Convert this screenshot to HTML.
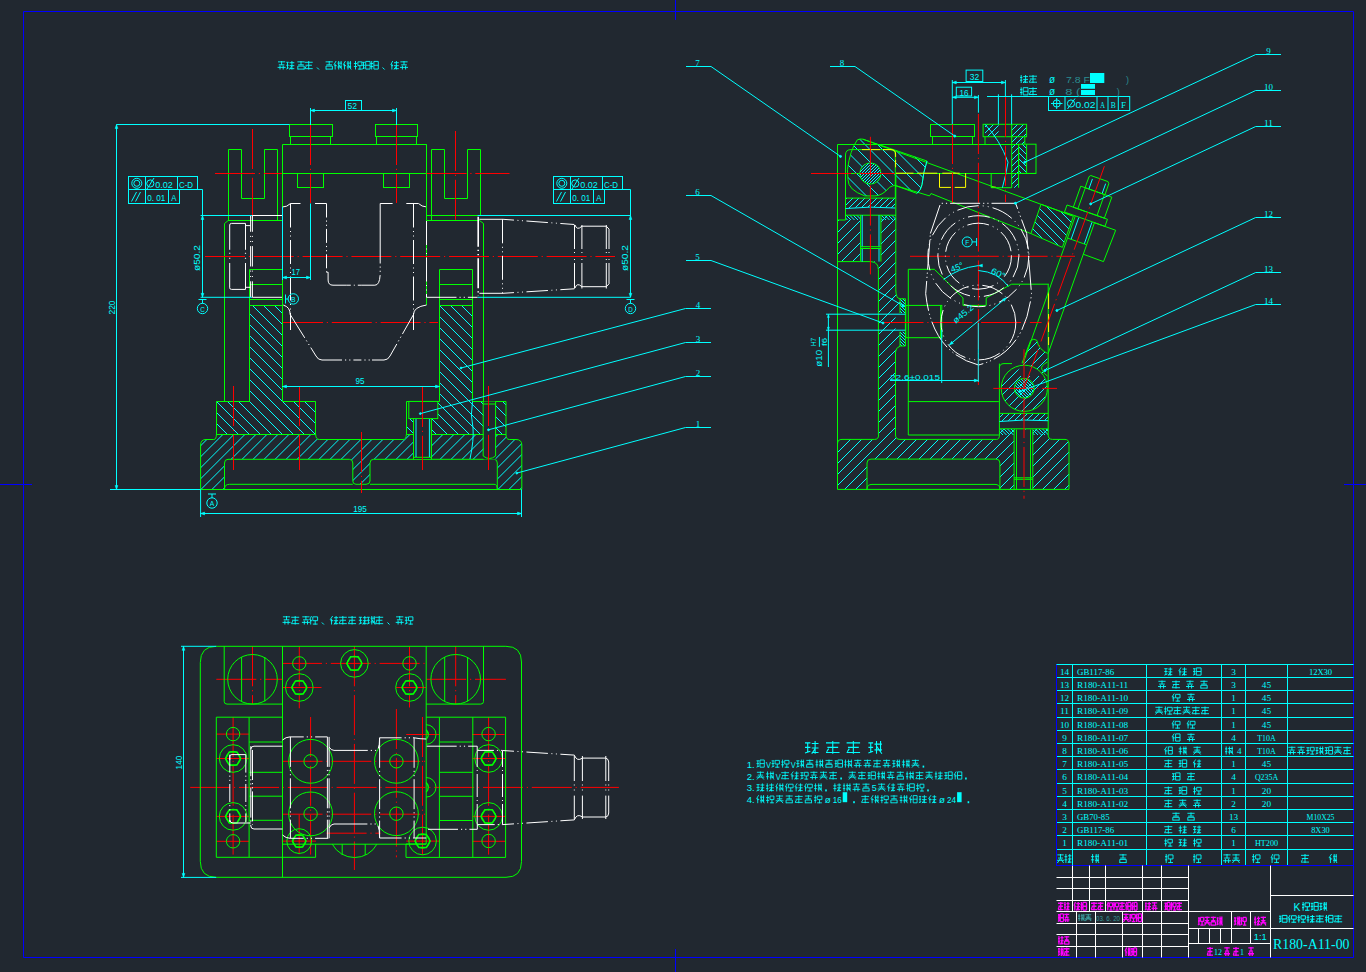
<!DOCTYPE html>
<html><head><meta charset="utf-8"><style>
html,body{margin:0;padding:0;background:#212830;width:1366px;height:972px;overflow:hidden;}
svg{display:block;}

</style></head><body>
<svg width="1366" height="972" viewBox="0 0 1366 972">
<rect x="0" y="0" width="1366" height="972" fill="#212830"/>
<polygon points="23.5,11.5 1353.5,11.5 1353.5,957.5 23.5,957.5" fill="none" stroke="#0000ff" stroke-width="1"/>
<line x1="675.5" y1="0" x2="675.5" y2="20" stroke="#0000ff" stroke-width="1"/>
<line x1="675.5" y1="949" x2="675.5" y2="972" stroke="#0000ff" stroke-width="1"/>
<line x1="0" y1="484.5" x2="32" y2="484.5" stroke="#0000ff" stroke-width="1"/>
<line x1="1344" y1="484.5" x2="1366" y2="484.5" stroke="#0000ff" stroke-width="1"/>
<line x1="1056" y1="664.5" x2="1353.5" y2="664.5" stroke="#00ffff" stroke-width="1"/>
<line x1="1056" y1="677.5" x2="1353.5" y2="677.5" stroke="#00ffff" stroke-width="1"/>
<line x1="1056" y1="690.5" x2="1353.5" y2="690.5" stroke="#00ffff" stroke-width="1"/>
<line x1="1056" y1="703.5" x2="1353.5" y2="703.5" stroke="#00ffff" stroke-width="1"/>
<line x1="1056" y1="717.5" x2="1353.5" y2="717.5" stroke="#00ffff" stroke-width="1"/>
<line x1="1056" y1="730.5" x2="1353.5" y2="730.5" stroke="#00ffff" stroke-width="1"/>
<line x1="1056" y1="743.5" x2="1353.5" y2="743.5" stroke="#00ffff" stroke-width="1"/>
<line x1="1056" y1="756.5" x2="1353.5" y2="756.5" stroke="#00ffff" stroke-width="1"/>
<line x1="1056" y1="769.5" x2="1353.5" y2="769.5" stroke="#00ffff" stroke-width="1"/>
<line x1="1056" y1="783.5" x2="1353.5" y2="783.5" stroke="#00ffff" stroke-width="1"/>
<line x1="1056" y1="796.5" x2="1353.5" y2="796.5" stroke="#00ffff" stroke-width="1"/>
<line x1="1056" y1="809.5" x2="1353.5" y2="809.5" stroke="#00ffff" stroke-width="1"/>
<line x1="1056" y1="822.5" x2="1353.5" y2="822.5" stroke="#00ffff" stroke-width="1"/>
<line x1="1056" y1="835.5" x2="1353.5" y2="835.5" stroke="#00ffff" stroke-width="1"/>
<line x1="1056" y1="849.5" x2="1353.5" y2="849.5" stroke="#00ffff" stroke-width="1"/>
<line x1="1072.5" y1="664.5" x2="1072.5" y2="865.5" stroke="#00ffff" stroke-width="1"/>
<line x1="1146.5" y1="664.5" x2="1146.5" y2="865.5" stroke="#00ffff" stroke-width="1"/>
<line x1="1221.5" y1="664.5" x2="1221.5" y2="865.5" stroke="#00ffff" stroke-width="1"/>
<line x1="1245.5" y1="664.5" x2="1245.5" y2="865.5" stroke="#00ffff" stroke-width="1"/>
<line x1="1287.5" y1="664.5" x2="1287.5" y2="865.5" stroke="#00ffff" stroke-width="1"/>
<line x1="1056.5" y1="664.5" x2="1056.5" y2="865.5" stroke="#0000ff" stroke-width="1"/>
<text x="1064.5" y="674.5" fill="#00ffff" font-size="8.5" font-family="Liberation Serif" text-anchor="middle" font-weight="normal" textLength="9.2" lengthAdjust="spacingAndGlyphs">14</text>
<text x="1077" y="674.5" fill="#00ffff" font-size="8.5" font-family="Liberation Serif" text-anchor="start" font-weight="normal" textLength="37.2" lengthAdjust="spacingAndGlyphs">GB117-86</text>
<path d="M1164.30 668.70H1167.50M1165.90 668.70V674.70M1164.30 671.50H1167.50M1164.30 675.10L1167.50 673.90M1168.30 669.10H1172.30M1168.30 671.90H1172.30M1168.30 674.70H1172.30M1170.30 667.50V675.50M1168.30 675.50L1170.30 672.30" fill="none" stroke="#00ffff" stroke-width="0.9"/>
<path d="M1180.94 667.50L1178.70 671.10M1179.96 670.30V675.50M1179.10 671.90H1181.50M1182.30 669.10H1186.70M1182.30 671.90H1186.70M1182.30 674.70H1186.70M1184.50 667.50V675.50M1182.30 675.50L1184.50 672.30" fill="none" stroke="#00ffff" stroke-width="0.9"/>
<path d="M1193.10 668.70H1195.50M1194.30 668.70V674.70M1193.10 671.50H1195.50M1193.10 675.10L1195.50 673.90M1196.30 667.90V675.10M1201.10 667.90V675.10M1196.30 667.90H1201.10M1196.30 671.50H1201.10M1196.30 675.10H1201.10" fill="none" stroke="#00ffff" stroke-width="0.9"/>
<text x="1233.5" y="674.5" fill="#00ffff" font-size="8.5" font-family="Liberation Serif" text-anchor="middle" font-weight="normal" textLength="4.6" lengthAdjust="spacingAndGlyphs">3</text>
<text x="1320.5" y="674.5" fill="#00ffff" font-size="8.5" font-family="Liberation Serif" text-anchor="middle" font-weight="normal" textLength="23.25" lengthAdjust="spacingAndGlyphs">12X30</text>
<text x="1064.5" y="687.5" fill="#00ffff" font-size="8.5" font-family="Liberation Serif" text-anchor="middle" font-weight="normal" textLength="9.2" lengthAdjust="spacingAndGlyphs">13</text>
<text x="1077" y="687.5" fill="#00ffff" font-size="8.5" font-family="Liberation Serif" text-anchor="start" font-weight="normal" textLength="51.150000000000006" lengthAdjust="spacingAndGlyphs">R180-A11-11</text>
<path d="M1158.40 681.30H1165.60M1162.00 680.50V684.10M1159.20 684.10H1164.80M1158.00 686.50H1166.00M1160.40 684.90V688.50M1163.60 684.90V688.50" fill="none" stroke="#00ffff" stroke-width="0.9"/>
<path d="M1172.00 681.70H1180.00M1172.80 684.50H1179.20M1172.00 687.70H1180.00M1176.00 680.50V688.50M1173.60 685.30L1172.40 687.30" fill="none" stroke="#00ffff" stroke-width="0.9"/>
<path d="M1186.40 681.30H1193.60M1190.00 680.50V684.10M1187.20 684.10H1192.80M1186.00 686.50H1194.00M1188.40 684.90V688.50M1191.60 684.90V688.50" fill="none" stroke="#00ffff" stroke-width="0.9"/>
<path d="M1200.40 681.30H1207.60M1204.00 680.50V684.10M1201.20 684.10H1206.80M1200.80 685.30V688.50M1207.20 685.30V688.50M1200.80 685.30H1207.20M1200.80 688.10H1207.20" fill="none" stroke="#00ffff" stroke-width="0.9"/>
<text x="1233.5" y="687.5" fill="#00ffff" font-size="8.5" font-family="Liberation Serif" text-anchor="middle" font-weight="normal" textLength="4.6" lengthAdjust="spacingAndGlyphs">3</text>
<text x="1266.5" y="687.5" fill="#00ffff" font-size="8.5" font-family="Liberation Serif" text-anchor="middle" font-weight="normal" textLength="9.3" lengthAdjust="spacingAndGlyphs">45</text>
<text x="1064.5" y="700.5" fill="#00ffff" font-size="8.5" font-family="Liberation Serif" text-anchor="middle" font-weight="normal" textLength="9.2" lengthAdjust="spacingAndGlyphs">12</text>
<text x="1077" y="700.5" fill="#00ffff" font-size="8.5" font-family="Liberation Serif" text-anchor="start" font-weight="normal" textLength="51.150000000000006" lengthAdjust="spacingAndGlyphs">R180-A11-10</text>
<path d="M1174.24 693.50L1172.00 697.10M1173.26 696.30V701.50M1172.40 697.90H1174.80M1175.60 694.30H1180.00M1175.60 694.30V697.90M1180.00 694.30V697.90M1175.60 697.90H1180.00M1175.60 701.10H1180.00M1177.80 697.90V701.50" fill="none" stroke="#00ffff" stroke-width="0.9"/>
<path d="M1187.40 694.30H1194.60M1191.00 693.50V697.10M1188.20 697.10H1193.80M1187.00 699.50H1195.00M1189.40 697.90V701.50M1192.60 697.90V701.50" fill="none" stroke="#00ffff" stroke-width="0.9"/>
<text x="1233.5" y="700.5" fill="#00ffff" font-size="8.5" font-family="Liberation Serif" text-anchor="middle" font-weight="normal" textLength="4.6" lengthAdjust="spacingAndGlyphs">1</text>
<text x="1266.5" y="700.5" fill="#00ffff" font-size="8.5" font-family="Liberation Serif" text-anchor="middle" font-weight="normal" textLength="9.3" lengthAdjust="spacingAndGlyphs">45</text>
<text x="1064.5" y="713.5" fill="#00ffff" font-size="8.5" font-family="Liberation Serif" text-anchor="middle" font-weight="normal" textLength="9.2" lengthAdjust="spacingAndGlyphs">11</text>
<text x="1077" y="713.5" fill="#00ffff" font-size="8.5" font-family="Liberation Serif" text-anchor="start" font-weight="normal" textLength="51.150000000000006" lengthAdjust="spacingAndGlyphs">R180-A11-09</text>
<path d="M1155.40 707.30H1162.60M1159.00 706.50V710.10M1156.20 710.10H1161.80M1159.00 710.50L1155.40 714.50M1159.00 710.50L1162.60 714.50M1155.00 712.10H1163.00" fill="none" stroke="#00ffff" stroke-width="0.9"/>
<path d="M1165.40 706.50V714.50M1164.20 708.90H1166.60M1164.20 711.70H1166.60M1167.40 707.30H1172.20M1167.40 707.30V710.90M1172.20 707.30V710.90M1167.40 710.90H1172.20M1167.40 714.10H1172.20M1169.80 710.90V714.50" fill="none" stroke="#00ffff" stroke-width="0.9"/>
<path d="M1173.40 707.70H1181.40M1174.20 710.50H1180.60M1173.40 713.70H1181.40M1177.40 706.50V714.50M1175.00 711.30L1173.80 713.30" fill="none" stroke="#00ffff" stroke-width="0.9"/>
<path d="M1183.00 707.30H1190.20M1186.60 706.50V710.10M1183.80 710.10H1189.40M1186.60 710.50L1183.00 714.50M1186.60 710.50L1190.20 714.50M1182.60 712.10H1190.60" fill="none" stroke="#00ffff" stroke-width="0.9"/>
<path d="M1191.80 707.70H1199.80M1192.60 710.50H1199.00M1191.80 713.70H1199.80M1195.80 706.50V714.50M1193.40 711.30L1192.20 713.30" fill="none" stroke="#00ffff" stroke-width="0.9"/>
<path d="M1201.00 707.70H1209.00M1201.80 710.50H1208.20M1201.00 713.70H1209.00M1205.00 706.50V714.50M1202.60 711.30L1201.40 713.30" fill="none" stroke="#00ffff" stroke-width="0.9"/>
<text x="1233.5" y="713.5" fill="#00ffff" font-size="8.5" font-family="Liberation Serif" text-anchor="middle" font-weight="normal" textLength="4.6" lengthAdjust="spacingAndGlyphs">1</text>
<text x="1266.5" y="713.5" fill="#00ffff" font-size="8.5" font-family="Liberation Serif" text-anchor="middle" font-weight="normal" textLength="9.3" lengthAdjust="spacingAndGlyphs">45</text>
<text x="1064.5" y="727.5" fill="#00ffff" font-size="8.5" font-family="Liberation Serif" text-anchor="middle" font-weight="normal" textLength="9.2" lengthAdjust="spacingAndGlyphs">10</text>
<text x="1077" y="727.5" fill="#00ffff" font-size="8.5" font-family="Liberation Serif" text-anchor="start" font-weight="normal" textLength="51.150000000000006" lengthAdjust="spacingAndGlyphs">R180-A11-08</text>
<path d="M1173.92 720.50L1172.00 724.10M1173.08 723.30V728.50M1172.40 724.90H1174.40M1175.20 721.30H1180.00M1175.20 721.30V724.90M1180.00 721.30V724.90M1175.20 724.90H1180.00M1175.20 728.10H1180.00M1177.60 724.90V728.50" fill="none" stroke="#00ffff" stroke-width="0.9"/>
<path d="M1188.92 720.50L1187.00 724.10M1188.08 723.30V728.50M1187.40 724.90H1189.40M1190.20 721.30H1195.00M1190.20 721.30V724.90M1195.00 721.30V724.90M1190.20 724.90H1195.00M1190.20 728.10H1195.00M1192.60 724.90V728.50" fill="none" stroke="#00ffff" stroke-width="0.9"/>
<text x="1233.5" y="727.5" fill="#00ffff" font-size="8.5" font-family="Liberation Serif" text-anchor="middle" font-weight="normal" textLength="4.6" lengthAdjust="spacingAndGlyphs">1</text>
<text x="1266.5" y="727.5" fill="#00ffff" font-size="8.5" font-family="Liberation Serif" text-anchor="middle" font-weight="normal" textLength="9.3" lengthAdjust="spacingAndGlyphs">45</text>
<text x="1064.5" y="740.5" fill="#00ffff" font-size="8.5" font-family="Liberation Serif" text-anchor="middle" font-weight="normal" textLength="4.6" lengthAdjust="spacingAndGlyphs">9</text>
<text x="1077" y="740.5" fill="#00ffff" font-size="8.5" font-family="Liberation Serif" text-anchor="start" font-weight="normal" textLength="51.150000000000006" lengthAdjust="spacingAndGlyphs">R180-A11-07</text>
<path d="M1174.24 733.50L1172.00 737.10M1173.26 736.30V741.50M1172.40 737.90H1174.80M1175.60 733.90V741.10M1180.00 733.90V741.10M1175.60 733.90H1180.00M1175.60 737.50H1180.00M1175.60 741.10H1180.00" fill="none" stroke="#00ffff" stroke-width="0.9"/>
<path d="M1187.40 734.30H1194.60M1191.00 733.50V737.10M1188.20 737.10H1193.80M1187.00 739.50H1195.00M1189.40 737.90V741.50M1192.60 737.90V741.50" fill="none" stroke="#00ffff" stroke-width="0.9"/>
<text x="1233.5" y="740.5" fill="#00ffff" font-size="8.5" font-family="Liberation Serif" text-anchor="middle" font-weight="normal" textLength="4.6" lengthAdjust="spacingAndGlyphs">4</text>
<text x="1266.5" y="740.5" fill="#00ffff" font-size="8.5" font-family="Liberation Serif" text-anchor="middle" font-weight="normal" textLength="18.6" lengthAdjust="spacingAndGlyphs">T10A</text>
<text x="1064.5" y="753.5" fill="#00ffff" font-size="8.5" font-family="Liberation Serif" text-anchor="middle" font-weight="normal" textLength="4.6" lengthAdjust="spacingAndGlyphs">8</text>
<text x="1077" y="753.5" fill="#00ffff" font-size="8.5" font-family="Liberation Serif" text-anchor="start" font-weight="normal" textLength="51.150000000000006" lengthAdjust="spacingAndGlyphs">R180-A11-06</text>
<path d="M1166.86 746.50L1164.30 750.10M1165.74 749.30V754.50M1164.70 750.90H1167.50M1168.30 746.90V754.10M1172.30 746.90V754.10M1168.30 746.90H1172.30M1168.30 750.50H1172.30M1168.30 754.10H1172.30" fill="none" stroke="#00ffff" stroke-width="0.9"/>
<path d="M1180.30 746.50V754.50M1178.70 748.90H1181.90M1178.70 751.70H1181.90M1182.70 748.50H1186.70M1183.90 746.50V754.50M1185.90 746.50V752.90M1182.70 752.10H1186.70M1183.50 749.70L1186.70 754.50" fill="none" stroke="#00ffff" stroke-width="0.9"/>
<path d="M1193.50 747.30H1200.70M1197.10 746.50V750.10M1194.30 750.10H1199.90M1197.10 750.50L1193.50 754.50M1197.10 750.50L1200.70 754.50M1193.10 752.10H1201.10" fill="none" stroke="#00ffff" stroke-width="0.9"/>
<path d="M1226.20 746.50V754.50M1225.00 748.90H1227.40M1225.00 751.70H1227.40M1228.20 748.50H1233.00M1229.40 746.50V754.50M1232.20 746.50V752.90M1228.20 752.10H1233.00M1229.80 749.70L1233.00 754.50" fill="none" stroke="#00ffff" stroke-width="0.9"/>
<text x="1237" y="753.5" fill="#00ffff" font-size="8.5" font-family="Liberation Serif" text-anchor="start" font-weight="normal" textLength="4.6" lengthAdjust="spacingAndGlyphs">4</text>
<text x="1266.5" y="753.5" fill="#00ffff" font-size="8.5" font-family="Liberation Serif" text-anchor="middle" font-weight="normal" textLength="18.6" lengthAdjust="spacingAndGlyphs">T10A</text>
<path d="M1288.39 747.30H1295.41M1291.90 746.50V750.10M1289.17 750.10H1294.63M1288.00 752.50H1295.80M1290.34 750.90V754.50M1293.46 750.90V754.50" fill="none" stroke="#00ffff" stroke-width="0.9"/>
<path d="M1297.59 747.30H1304.61M1301.10 746.50V750.10M1298.37 750.10H1303.83M1297.20 752.50H1305.00M1299.54 750.90V754.50M1302.66 750.90V754.50" fill="none" stroke="#00ffff" stroke-width="0.9"/>
<path d="M1306.40 747.70H1309.52M1307.96 747.70V753.70M1306.40 750.50H1309.52M1306.40 754.10L1309.52 752.90M1310.30 747.30H1314.20M1310.30 747.30V750.90M1314.20 747.30V750.90M1310.30 750.90H1314.20M1310.30 754.10H1314.20M1312.25 750.90V754.50" fill="none" stroke="#00ffff" stroke-width="0.9"/>
<path d="M1315.60 747.70H1318.33M1316.96 747.70V753.70M1315.60 750.50H1318.33M1315.60 754.10L1318.33 752.90M1319.11 748.50H1323.40M1320.28 746.50V754.50M1322.62 746.50V752.90M1319.11 752.10H1323.40M1320.28 749.70L1323.40 754.50" fill="none" stroke="#00ffff" stroke-width="0.9"/>
<path d="M1324.80 747.70H1327.92M1326.36 747.70V753.70M1324.80 750.50H1327.92M1324.80 754.10L1327.92 752.90M1328.70 746.90V754.10M1332.60 746.90V754.10M1328.70 746.90H1332.60M1328.70 750.50H1332.60M1328.70 754.10H1332.60" fill="none" stroke="#00ffff" stroke-width="0.9"/>
<path d="M1334.39 747.30H1341.41M1337.90 746.50V750.10M1335.17 750.10H1340.63M1337.90 750.50L1334.39 754.50M1337.90 750.50L1341.41 754.50M1334.00 752.10H1341.80" fill="none" stroke="#00ffff" stroke-width="0.9"/>
<path d="M1343.20 747.70H1351.00M1343.98 750.50H1350.22M1343.20 753.70H1351.00M1347.10 746.50V754.50M1344.76 751.30L1343.59 753.30" fill="none" stroke="#00ffff" stroke-width="0.9"/>
<text x="1064.5" y="766.5" fill="#00ffff" font-size="8.5" font-family="Liberation Serif" text-anchor="middle" font-weight="normal" textLength="4.6" lengthAdjust="spacingAndGlyphs">7</text>
<text x="1077" y="766.5" fill="#00ffff" font-size="8.5" font-family="Liberation Serif" text-anchor="start" font-weight="normal" textLength="51.150000000000006" lengthAdjust="spacingAndGlyphs">R180-A11-05</text>
<path d="M1164.30 760.70H1172.30M1165.10 763.50H1171.50M1164.30 766.70H1172.30M1168.30 759.50V767.50M1165.90 764.30L1164.70 766.30" fill="none" stroke="#00ffff" stroke-width="0.9"/>
<path d="M1178.70 760.70H1181.50M1180.10 760.70V766.70M1178.70 763.50H1181.50M1178.70 767.10L1181.50 765.90M1182.30 759.90V767.10M1186.70 759.90V767.10M1182.30 759.90H1186.70M1182.30 763.50H1186.70M1182.30 767.10H1186.70" fill="none" stroke="#00ffff" stroke-width="0.9"/>
<path d="M1195.66 759.50L1193.10 763.10M1194.54 762.30V767.50M1193.50 763.90H1196.30M1197.10 761.10H1201.10M1197.10 763.90H1201.10M1197.10 766.70H1201.10M1199.10 759.50V767.50M1197.10 767.50L1199.10 764.30" fill="none" stroke="#00ffff" stroke-width="0.9"/>
<text x="1233.5" y="766.5" fill="#00ffff" font-size="8.5" font-family="Liberation Serif" text-anchor="middle" font-weight="normal" textLength="4.6" lengthAdjust="spacingAndGlyphs">1</text>
<text x="1266.5" y="766.5" fill="#00ffff" font-size="8.5" font-family="Liberation Serif" text-anchor="middle" font-weight="normal" textLength="9.3" lengthAdjust="spacingAndGlyphs">45</text>
<text x="1064.5" y="779.5" fill="#00ffff" font-size="8.5" font-family="Liberation Serif" text-anchor="middle" font-weight="normal" textLength="4.6" lengthAdjust="spacingAndGlyphs">6</text>
<text x="1077" y="779.5" fill="#00ffff" font-size="8.5" font-family="Liberation Serif" text-anchor="start" font-weight="normal" textLength="51.150000000000006" lengthAdjust="spacingAndGlyphs">R180-A11-04</text>
<path d="M1172.00 773.70H1174.80M1173.40 773.70V779.70M1172.00 776.50H1174.80M1172.00 780.10L1174.80 778.90M1175.60 772.90V780.10M1180.00 772.90V780.10M1175.60 772.90H1180.00M1175.60 776.50H1180.00M1175.60 780.10H1180.00" fill="none" stroke="#00ffff" stroke-width="0.9"/>
<path d="M1187.00 773.70H1195.00M1187.80 776.50H1194.20M1187.00 779.70H1195.00M1191.00 772.50V780.50M1188.60 777.30L1187.40 779.30" fill="none" stroke="#00ffff" stroke-width="0.9"/>
<text x="1233.5" y="779.5" fill="#00ffff" font-size="8.5" font-family="Liberation Serif" text-anchor="middle" font-weight="normal" textLength="4.6" lengthAdjust="spacingAndGlyphs">4</text>
<text x="1266.5" y="779.5" fill="#00ffff" font-size="8.5" font-family="Liberation Serif" text-anchor="middle" font-weight="normal" textLength="23.25" lengthAdjust="spacingAndGlyphs">Q235A</text>
<text x="1064.5" y="793.5" fill="#00ffff" font-size="8.5" font-family="Liberation Serif" text-anchor="middle" font-weight="normal" textLength="4.6" lengthAdjust="spacingAndGlyphs">5</text>
<text x="1077" y="793.5" fill="#00ffff" font-size="8.5" font-family="Liberation Serif" text-anchor="start" font-weight="normal" textLength="51.150000000000006" lengthAdjust="spacingAndGlyphs">R180-A11-03</text>
<path d="M1164.30 787.70H1172.30M1165.10 790.50H1171.50M1164.30 793.70H1172.30M1168.30 786.50V794.50M1165.90 791.30L1164.70 793.30" fill="none" stroke="#00ffff" stroke-width="0.9"/>
<path d="M1178.70 787.70H1181.10M1179.90 787.70V793.70M1178.70 790.50H1181.10M1178.70 794.10L1181.10 792.90M1181.90 786.90V794.10M1186.70 786.90V794.10M1181.90 786.90H1186.70M1181.90 790.50H1186.70M1181.90 794.10H1186.70" fill="none" stroke="#00ffff" stroke-width="0.9"/>
<path d="M1194.50 786.50V794.50M1193.10 788.90H1195.90M1193.10 791.70H1195.90M1196.70 787.30H1201.10M1196.70 787.30V790.90M1201.10 787.30V790.90M1196.70 790.90H1201.10M1196.70 794.10H1201.10M1198.90 790.90V794.50" fill="none" stroke="#00ffff" stroke-width="0.9"/>
<text x="1233.5" y="793.5" fill="#00ffff" font-size="8.5" font-family="Liberation Serif" text-anchor="middle" font-weight="normal" textLength="4.6" lengthAdjust="spacingAndGlyphs">1</text>
<text x="1266.5" y="793.5" fill="#00ffff" font-size="8.5" font-family="Liberation Serif" text-anchor="middle" font-weight="normal" textLength="9.3" lengthAdjust="spacingAndGlyphs">20</text>
<text x="1064.5" y="806.5" fill="#00ffff" font-size="8.5" font-family="Liberation Serif" text-anchor="middle" font-weight="normal" textLength="4.6" lengthAdjust="spacingAndGlyphs">4</text>
<text x="1077" y="806.5" fill="#00ffff" font-size="8.5" font-family="Liberation Serif" text-anchor="start" font-weight="normal" textLength="51.150000000000006" lengthAdjust="spacingAndGlyphs">R180-A11-02</text>
<path d="M1164.30 800.70H1172.30M1165.10 803.50H1171.50M1164.30 806.70H1172.30M1168.30 799.50V807.50M1165.90 804.30L1164.70 806.30" fill="none" stroke="#00ffff" stroke-width="0.9"/>
<path d="M1179.10 800.30H1186.30M1182.70 799.50V803.10M1179.90 803.10H1185.50M1182.70 803.50L1179.10 807.50M1182.70 803.50L1186.30 807.50M1178.70 805.10H1186.70" fill="none" stroke="#00ffff" stroke-width="0.9"/>
<path d="M1193.50 800.30H1200.70M1197.10 799.50V803.10M1194.30 803.10H1199.90M1193.10 805.50H1201.10M1195.50 803.90V807.50M1198.70 803.90V807.50" fill="none" stroke="#00ffff" stroke-width="0.9"/>
<text x="1233.5" y="806.5" fill="#00ffff" font-size="8.5" font-family="Liberation Serif" text-anchor="middle" font-weight="normal" textLength="4.6" lengthAdjust="spacingAndGlyphs">2</text>
<text x="1266.5" y="806.5" fill="#00ffff" font-size="8.5" font-family="Liberation Serif" text-anchor="middle" font-weight="normal" textLength="9.3" lengthAdjust="spacingAndGlyphs">20</text>
<text x="1064.5" y="819.5" fill="#00ffff" font-size="8.5" font-family="Liberation Serif" text-anchor="middle" font-weight="normal" textLength="4.6" lengthAdjust="spacingAndGlyphs">3</text>
<text x="1077" y="819.5" fill="#00ffff" font-size="8.5" font-family="Liberation Serif" text-anchor="start" font-weight="normal" textLength="32.550000000000004" lengthAdjust="spacingAndGlyphs">GB70-85</text>
<path d="M1172.40 813.30H1179.60M1176.00 812.50V816.10M1173.20 816.10H1178.80M1172.80 817.30V820.50M1179.20 817.30V820.50M1172.80 817.30H1179.20M1172.80 820.10H1179.20" fill="none" stroke="#00ffff" stroke-width="0.9"/>
<path d="M1187.40 813.30H1194.60M1191.00 812.50V816.10M1188.20 816.10H1193.80M1187.80 817.30V820.50M1194.20 817.30V820.50M1187.80 817.30H1194.20M1187.80 820.10H1194.20" fill="none" stroke="#00ffff" stroke-width="0.9"/>
<text x="1233.5" y="819.5" fill="#00ffff" font-size="8.5" font-family="Liberation Serif" text-anchor="middle" font-weight="normal" textLength="9.2" lengthAdjust="spacingAndGlyphs">13</text>
<text x="1320.5" y="819.5" fill="#00ffff" font-size="8.5" font-family="Liberation Serif" text-anchor="middle" font-weight="normal" textLength="27.900000000000002" lengthAdjust="spacingAndGlyphs">M10X25</text>
<text x="1064.5" y="832.5" fill="#00ffff" font-size="8.5" font-family="Liberation Serif" text-anchor="middle" font-weight="normal" textLength="4.6" lengthAdjust="spacingAndGlyphs">2</text>
<text x="1077" y="832.5" fill="#00ffff" font-size="8.5" font-family="Liberation Serif" text-anchor="start" font-weight="normal" textLength="37.2" lengthAdjust="spacingAndGlyphs">GB117-86</text>
<path d="M1164.30 826.70H1172.30M1165.10 829.50H1171.50M1164.30 832.70H1172.30M1168.30 825.50V833.50M1165.90 830.30L1164.70 832.30" fill="none" stroke="#00ffff" stroke-width="0.9"/>
<path d="M1180.30 825.50V833.50M1178.70 827.90H1181.90M1178.70 830.70H1181.90M1182.70 827.10H1186.70M1182.70 829.90H1186.70M1182.70 832.70H1186.70M1184.70 825.50V833.50M1182.70 833.50L1184.70 830.30" fill="none" stroke="#00ffff" stroke-width="0.9"/>
<path d="M1193.10 826.70H1196.30M1194.70 826.70V832.70M1193.10 829.50H1196.30M1193.10 833.10L1196.30 831.90M1197.10 827.10H1201.10M1197.10 829.90H1201.10M1197.10 832.70H1201.10M1199.10 825.50V833.50M1197.10 833.50L1199.10 830.30" fill="none" stroke="#00ffff" stroke-width="0.9"/>
<text x="1233.5" y="832.5" fill="#00ffff" font-size="8.5" font-family="Liberation Serif" text-anchor="middle" font-weight="normal" textLength="4.6" lengthAdjust="spacingAndGlyphs">6</text>
<text x="1320.5" y="832.5" fill="#00ffff" font-size="8.5" font-family="Liberation Serif" text-anchor="middle" font-weight="normal" textLength="18.6" lengthAdjust="spacingAndGlyphs">8X30</text>
<text x="1064.5" y="845.5" fill="#00ffff" font-size="8.5" font-family="Liberation Serif" text-anchor="middle" font-weight="normal" textLength="4.6" lengthAdjust="spacingAndGlyphs">1</text>
<text x="1077" y="845.5" fill="#00ffff" font-size="8.5" font-family="Liberation Serif" text-anchor="start" font-weight="normal" textLength="51.150000000000006" lengthAdjust="spacingAndGlyphs">R180-A11-01</text>
<path d="M1165.70 838.50V846.50M1164.30 840.90H1167.10M1164.30 843.70H1167.10M1167.90 839.30H1172.30M1167.90 839.30V842.90M1172.30 839.30V842.90M1167.90 842.90H1172.30M1167.90 846.10H1172.30M1170.10 842.90V846.50" fill="none" stroke="#00ffff" stroke-width="0.9"/>
<path d="M1178.70 839.70H1181.90M1180.30 839.70V845.70M1178.70 842.50H1181.90M1178.70 846.10L1181.90 844.90M1182.70 840.10H1186.70M1182.70 842.90H1186.70M1182.70 845.70H1186.70M1184.70 838.50V846.50M1182.70 846.50L1184.70 843.30" fill="none" stroke="#00ffff" stroke-width="0.9"/>
<path d="M1194.50 838.50V846.50M1193.10 840.90H1195.90M1193.10 843.70H1195.90M1196.70 839.30H1201.10M1196.70 839.30V842.90M1201.10 839.30V842.90M1196.70 842.90H1201.10M1196.70 846.10H1201.10M1198.90 842.90V846.50" fill="none" stroke="#00ffff" stroke-width="0.9"/>
<text x="1233.5" y="845.5" fill="#00ffff" font-size="8.5" font-family="Liberation Serif" text-anchor="middle" font-weight="normal" textLength="4.6" lengthAdjust="spacingAndGlyphs">1</text>
<text x="1266.5" y="845.5" fill="#00ffff" font-size="8.5" font-family="Liberation Serif" text-anchor="middle" font-weight="normal" textLength="23.25" lengthAdjust="spacingAndGlyphs">HT200</text>
<path d="M1057.35 854.90H1063.65M1060.50 854.00V858.05M1058.05 858.05H1062.95M1060.50 858.50L1057.35 863.00M1060.50 858.50L1063.65 863.00M1057.00 860.30H1064.00" fill="none" stroke="#00ffff" stroke-width="0.9"/>
<path d="M1065.90 854.00V863.00M1064.50 856.70H1067.30M1064.50 859.85H1067.30M1068.00 855.80H1071.50M1068.00 858.95H1071.50M1068.00 862.10H1071.50M1069.75 854.00V863.00M1068.00 863.00L1069.75 859.40" fill="none" stroke="#00ffff" stroke-width="0.9"/>
<path d="M1092.60 854.00V863.00M1091.00 856.70H1094.20M1091.00 859.85H1094.20M1095.00 856.25H1099.00M1096.20 854.00V863.00M1098.20 854.00V861.20M1095.00 860.30H1099.00M1095.80 857.60L1099.00 863.00" fill="none" stroke="#00ffff" stroke-width="0.9"/>
<path d="M1119.40 854.90H1126.60M1123.00 854.00V858.05M1120.20 858.05H1125.80M1119.80 859.40V863.00M1126.20 859.40V863.00M1119.80 859.40H1126.20M1119.80 862.55H1126.20" fill="none" stroke="#00ffff" stroke-width="0.9"/>
<path d="M1166.20 854.00V863.00M1165.00 856.70H1167.40M1165.00 859.85H1167.40M1168.20 854.90H1173.00M1168.20 854.90V858.95M1173.00 854.90V858.95M1168.20 858.95H1173.00M1168.20 862.55H1173.00M1170.60 858.95V863.00" fill="none" stroke="#00ffff" stroke-width="0.9"/>
<path d="M1194.20 854.00V863.00M1193.00 856.70H1195.40M1193.00 859.85H1195.40M1196.20 854.90H1201.00M1196.20 854.90V858.95M1201.00 854.90V858.95M1196.20 858.95H1201.00M1196.20 862.55H1201.00M1198.60 858.95V863.00" fill="none" stroke="#00ffff" stroke-width="0.9"/>
<path d="M1223.40 854.90H1230.60M1227.00 854.00V858.05M1224.20 858.05H1229.80M1223.00 860.75H1231.00M1225.40 858.95V863.00M1228.60 858.95V863.00" fill="none" stroke="#00ffff" stroke-width="0.9"/>
<path d="M1232.40 854.90H1239.60M1236.00 854.00V858.05M1233.20 858.05H1238.80M1236.00 858.50L1232.40 863.00M1236.00 858.50L1239.60 863.00M1232.00 860.30H1240.00" fill="none" stroke="#00ffff" stroke-width="0.9"/>
<path d="M1253.40 854.00V863.00M1252.00 856.70H1254.80M1252.00 859.85H1254.80M1255.60 854.90H1260.00M1255.60 854.90V858.95M1260.00 854.90V858.95M1255.60 858.95H1260.00M1255.60 862.55H1260.00M1257.80 858.95V863.00" fill="none" stroke="#00ffff" stroke-width="0.9"/>
<path d="M1272.92 854.00L1271.00 858.05M1272.08 857.15V863.00M1271.40 858.95H1273.40M1274.20 854.90H1279.00M1274.20 854.90V858.95M1279.00 854.90V858.95M1274.20 858.95H1279.00M1274.20 862.55H1279.00M1276.60 858.95V863.00" fill="none" stroke="#00ffff" stroke-width="0.9"/>
<path d="M1301.00 855.35H1309.00M1301.80 858.50H1308.20M1301.00 862.10H1309.00M1305.00 854.00V863.00M1302.60 859.40L1301.40 861.65" fill="none" stroke="#00ffff" stroke-width="0.9"/>
<path d="M1331.56 854.00L1329.00 858.05M1330.44 857.15V863.00M1329.40 858.95H1332.20M1333.00 856.25H1337.00M1334.20 854.00V863.00M1336.20 854.00V861.20M1333.00 860.30H1337.00M1333.80 857.60L1337.00 863.00" fill="none" stroke="#00ffff" stroke-width="0.9"/>
<line x1="1056" y1="865.5" x2="1353.5" y2="865.5" stroke="#0000ff" stroke-width="1"/>
<line x1="1056.5" y1="877.5" x2="1188.5" y2="877.5" stroke="#ffffff" stroke-width="1"/>
<line x1="1056.5" y1="888.5" x2="1188.5" y2="888.5" stroke="#ffffff" stroke-width="1"/>
<line x1="1056.5" y1="900.5" x2="1188.5" y2="900.5" stroke="#ffffff" stroke-width="1"/>
<line x1="1056.5" y1="911.5" x2="1188.5" y2="911.5" stroke="#ffffff" stroke-width="1"/>
<line x1="1056.5" y1="923.5" x2="1188.5" y2="923.5" stroke="#ffffff" stroke-width="1"/>
<line x1="1056.5" y1="934.5" x2="1188.5" y2="934.5" stroke="#ffffff" stroke-width="1"/>
<line x1="1056.5" y1="946.5" x2="1188.5" y2="946.5" stroke="#ffffff" stroke-width="1"/>
<line x1="1072.5" y1="865.5" x2="1072.5" y2="911.5" stroke="#ffffff" stroke-width="1"/>
<line x1="1089.5" y1="865.5" x2="1089.5" y2="911.5" stroke="#ffffff" stroke-width="1"/>
<line x1="1105.5" y1="865.5" x2="1105.5" y2="911.5" stroke="#ffffff" stroke-width="1"/>
<line x1="1142.5" y1="865.5" x2="1142.5" y2="957.5" stroke="#ffffff" stroke-width="1"/>
<line x1="1161.5" y1="865.5" x2="1161.5" y2="957.5" stroke="#ffffff" stroke-width="1"/>
<line x1="1188.5" y1="865.5" x2="1188.5" y2="957.5" stroke="#ffffff" stroke-width="1"/>
<line x1="1076.5" y1="911.5" x2="1076.5" y2="957.5" stroke="#ffffff" stroke-width="1"/>
<line x1="1095.5" y1="911.5" x2="1095.5" y2="957.5" stroke="#ffffff" stroke-width="1"/>
<line x1="1122.5" y1="911.5" x2="1122.5" y2="957.5" stroke="#ffffff" stroke-width="1"/>
<line x1="1270.5" y1="865.5" x2="1270.5" y2="957.5" stroke="#ffffff" stroke-width="1"/>
<line x1="1188.5" y1="911.5" x2="1270.5" y2="911.5" stroke="#ffffff" stroke-width="1"/>
<line x1="1188.5" y1="928.5" x2="1353.5" y2="928.5" stroke="#ffffff" stroke-width="1"/>
<line x1="1188.5" y1="943.5" x2="1270.5" y2="943.5" stroke="#ffffff" stroke-width="1"/>
<line x1="1270.5" y1="895.5" x2="1353.5" y2="895.5" stroke="#ffffff" stroke-width="1"/>
<line x1="1231.5" y1="911.5" x2="1231.5" y2="943.5" stroke="#ffffff" stroke-width="1"/>
<line x1="1250.5" y1="911.5" x2="1250.5" y2="943.5" stroke="#ffffff" stroke-width="1"/>
<line x1="1198.5" y1="928.5" x2="1198.5" y2="943.5" stroke="#ffffff" stroke-width="1"/>
<line x1="1209.5" y1="928.5" x2="1209.5" y2="943.5" stroke="#ffffff" stroke-width="1"/>
<line x1="1220.5" y1="928.5" x2="1220.5" y2="943.5" stroke="#ffffff" stroke-width="1"/>
<path d="M1058.00 903.27H1063.50M1058.55 906.25H1062.95M1058.00 909.65H1063.50M1060.75 902.00V910.50M1059.10 907.10L1058.28 909.23" fill="none" stroke="#ff00ff" stroke-width="1.3"/>
<path d="M1064.96 902.00V910.50M1064.00 904.55H1065.92M1064.00 907.52H1065.92M1066.47 903.70H1069.50M1066.47 906.67H1069.50M1066.47 909.65H1069.50M1067.99 902.00V910.50M1066.47 910.50L1067.99 907.10" fill="none" stroke="#ff00ff" stroke-width="1.3"/>
<path d="M1075.44 902.00L1074.00 905.83M1074.81 904.98V910.50M1074.30 906.67H1075.80M1076.40 903.70H1080.00M1076.40 906.67H1080.00M1076.40 909.65H1080.00M1078.20 902.00V910.50M1076.40 910.50L1078.20 907.10" fill="none" stroke="#ff00ff" stroke-width="1.3"/>
<path d="M1081.40 902.00V910.50M1080.50 904.55H1082.30M1080.50 907.52H1082.30M1082.90 902.42V910.08M1086.50 902.42V910.08M1082.90 902.42H1086.50M1082.90 906.25H1086.50M1082.90 910.08H1086.50" fill="none" stroke="#ff00ff" stroke-width="1.3"/>
<path d="M1091.00 903.27H1097.00M1091.60 906.25H1096.40M1091.00 909.65H1097.00M1094.00 902.00V910.50M1092.20 907.10L1091.30 909.23" fill="none" stroke="#ff00ff" stroke-width="1.3"/>
<path d="M1097.50 903.27H1103.50M1098.10 906.25H1102.90M1097.50 909.65H1103.50M1100.50 902.00V910.50M1098.70 907.10L1097.80 909.23" fill="none" stroke="#ff00ff" stroke-width="1.3"/>
<path d="M1108.34 902.00L1107.00 905.83M1107.76 904.98V910.50M1107.28 906.67H1108.68M1109.24 902.85H1112.60M1109.24 902.85V906.67M1112.60 902.85V906.67M1109.24 906.67H1112.60M1109.24 910.08H1112.60M1110.92 906.67V910.50" fill="none" stroke="#ff00ff" stroke-width="1.3"/>
<path d="M1113.94 902.00V910.50M1113.10 904.55H1114.78M1113.10 907.52H1114.78M1115.34 902.85H1118.70M1115.34 902.85V906.67M1118.70 902.85V906.67M1115.34 906.67H1118.70M1115.34 910.08H1118.70M1117.02 906.67V910.50" fill="none" stroke="#ff00ff" stroke-width="1.3"/>
<path d="M1119.20 903.27H1124.80M1119.76 906.25H1124.24M1119.20 909.65H1124.80M1122.00 902.00V910.50M1120.32 907.10L1119.48 909.23" fill="none" stroke="#ff00ff" stroke-width="1.3"/>
<path d="M1126.87 902.00L1125.30 905.83M1126.18 904.98V910.50M1125.58 906.67H1127.26M1127.82 902.42V910.08M1130.90 902.42V910.08M1127.82 902.42H1130.90M1127.82 906.25H1130.90M1127.82 910.08H1130.90" fill="none" stroke="#ff00ff" stroke-width="1.3"/>
<path d="M1133.19 902.00L1131.40 905.83M1132.41 904.98V910.50M1131.68 906.67H1133.64M1134.20 902.42V910.08M1137.00 902.42V910.08M1134.20 902.42H1137.00M1134.20 906.25H1137.00M1134.20 910.08H1137.00" fill="none" stroke="#ff00ff" stroke-width="1.3"/>
<path d="M1145.00 903.27H1146.80M1145.90 903.27V909.65M1145.00 906.25H1146.80M1145.00 910.08L1146.80 908.80M1147.40 903.70H1151.00M1147.40 906.67H1151.00M1147.40 909.65H1151.00M1149.20 902.00V910.50M1147.40 910.50L1149.20 907.10" fill="none" stroke="#ff00ff" stroke-width="1.3"/>
<path d="M1151.80 902.85H1157.20M1154.50 902.00V905.83M1152.40 905.83H1156.60M1151.50 908.38H1157.50M1153.30 906.67V910.50M1155.70 906.67V910.50" fill="none" stroke="#ff00ff" stroke-width="1.3"/>
<path d="M1164.50 903.27H1166.70M1165.60 903.27V909.65M1164.50 906.25H1166.70M1164.50 910.08L1166.70 908.80M1167.25 902.42V910.08M1170.00 902.42V910.08M1167.25 902.42H1170.00M1167.25 906.25H1170.00M1167.25 910.08H1170.00" fill="none" stroke="#ff00ff" stroke-width="1.3"/>
<path d="M1171.46 902.00V910.50M1170.50 904.55H1172.42M1170.50 907.52H1172.42M1172.97 902.85H1176.00M1172.97 902.85V906.67M1176.00 902.85V906.67M1172.97 906.67H1176.00M1172.97 910.08H1176.00M1174.49 906.67V910.50" fill="none" stroke="#ff00ff" stroke-width="1.3"/>
<path d="M1176.50 903.27H1182.00M1177.05 906.25H1181.45M1176.50 909.65H1182.00M1179.25 902.00V910.50M1177.60 907.10L1176.78 909.23" fill="none" stroke="#ff00ff" stroke-width="1.3"/>
<path d="M1058.00 914.77H1059.65M1058.83 914.77V921.15M1058.00 917.75H1059.65M1058.00 921.58L1059.65 920.30M1060.20 913.92V921.58M1063.50 913.92V921.58M1060.20 913.92H1063.50M1060.20 917.75H1063.50M1060.20 921.58H1063.50" fill="none" stroke="#ff00ff" stroke-width="1.3"/>
<path d="M1064.28 914.35H1069.22M1066.75 913.50V917.33M1064.83 917.33H1068.67M1064.00 919.88H1069.50M1065.65 918.17V922.00M1067.85 918.17V922.00" fill="none" stroke="#ff00ff" stroke-width="1.3"/>
<path d="M1079.14 914.00V921.00M1078.00 916.10H1080.28M1078.00 918.55H1080.28M1080.92 915.75H1084.50M1081.90 914.00V921.00M1083.85 914.00V919.60M1080.92 918.90H1084.50M1081.90 916.80L1084.50 921.00" fill="none" stroke="#3a9a9a" stroke-width="1.1"/>
<path d="M1085.33 914.70H1091.17M1088.25 914.00V917.15M1085.97 917.15H1090.53M1088.25 917.50L1085.33 921.00M1088.25 917.50L1091.17 921.00M1085.00 918.90H1091.50" fill="none" stroke="#3a9a9a" stroke-width="1.1"/>
<text x="1096" y="921" fill="#3a9a9a" font-size="8" font-family="Liberation Sans" text-anchor="start" font-weight="normal" textLength="24" lengthAdjust="spacingAndGlyphs">03. 6. 20</text>
<path d="M1123.30 914.35H1128.70M1126.00 913.50V917.33M1123.90 917.33H1128.10M1126.00 917.75L1123.30 922.00M1126.00 917.75L1128.70 922.00M1123.00 919.45H1129.00" fill="none" stroke="#ff00ff" stroke-width="1.3"/>
<path d="M1129.30 914.77H1131.10M1130.20 914.77V921.15M1129.30 917.75H1131.10M1129.30 921.58L1131.10 920.30M1131.70 914.35H1135.30M1131.70 914.35V918.17M1135.30 914.35V918.17M1131.70 918.17H1135.30M1131.70 921.58H1135.30M1133.50 918.17V922.00" fill="none" stroke="#ff00ff" stroke-width="1.3"/>
<path d="M1137.28 913.50L1135.60 917.33M1136.54 916.48V922.00M1135.90 918.17H1137.70M1138.30 913.92V921.58M1141.60 913.92V921.58M1138.30 913.92H1141.60M1138.30 917.75H1141.60M1138.30 921.58H1141.60" fill="none" stroke="#ff00ff" stroke-width="1.3"/>
<path d="M1058.96 936.00V944.50M1058.00 938.55H1059.92M1058.00 941.52H1059.92M1060.47 937.70H1063.50M1060.47 940.67H1063.50M1060.47 943.65H1063.50M1061.99 936.00V944.50M1060.47 944.50L1061.99 941.10" fill="none" stroke="#ff00ff" stroke-width="1.3"/>
<path d="M1064.28 936.85H1069.22M1066.75 936.00V939.83M1064.83 939.83H1068.67M1064.55 941.10V944.50M1068.95 941.10V944.50M1064.55 941.10H1068.95M1064.55 944.08H1068.95" fill="none" stroke="#ff00ff" stroke-width="1.3"/>
<path d="M1058.00 948.77H1059.92M1058.96 948.77V955.15M1058.00 951.75H1059.92M1058.00 955.58L1059.92 954.30M1060.47 949.62H1063.50M1061.30 947.50V956.00M1062.95 947.50V954.30M1060.47 953.45H1063.50M1061.30 950.90L1063.50 956.00" fill="none" stroke="#ff00ff" stroke-width="1.3"/>
<path d="M1064.00 948.77H1069.50M1064.55 951.75H1068.95M1064.00 955.15H1069.50M1066.75 947.50V956.00M1065.10 952.60L1064.28 954.73" fill="none" stroke="#ff00ff" stroke-width="1.3"/>
<path d="M1126.76 947.50L1125.00 951.33M1125.99 950.48V956.00M1125.28 952.17H1127.20M1127.75 949.62H1130.50M1128.58 947.50V956.00M1129.95 947.50V954.30M1127.75 953.45H1130.50M1128.30 950.90L1130.50 956.00" fill="none" stroke="#ff00ff" stroke-width="1.3"/>
<path d="M1131.00 948.77H1133.20M1132.10 948.77V955.15M1131.00 951.75H1133.20M1131.00 955.58L1133.20 954.30M1133.75 947.92V955.58M1136.50 947.92V955.58M1133.75 947.92H1136.50M1133.75 951.75H1136.50M1133.75 955.58H1136.50" fill="none" stroke="#ff00ff" stroke-width="1.3"/>
<path d="M1198.00 917.85H1199.74M1198.87 917.85V924.60M1198.00 921.00H1199.74M1198.00 925.05L1199.74 923.70M1200.32 917.40H1203.80M1200.32 917.40V921.45M1203.80 917.40V921.45M1200.32 921.45H1203.80M1200.32 925.05H1203.80M1202.06 921.45V925.50" fill="none" stroke="#ff00ff" stroke-width="1.3"/>
<path d="M1204.49 917.40H1209.71M1207.10 916.50V920.55M1205.07 920.55H1209.13M1207.10 921.00L1204.49 925.50M1207.10 921.00L1209.71 925.50M1204.20 922.80H1210.00" fill="none" stroke="#ff00ff" stroke-width="1.3"/>
<path d="M1210.69 917.40H1215.91M1213.30 916.50V920.55M1211.27 920.55H1215.33M1210.98 921.90V925.50M1215.62 921.90V925.50M1210.98 921.90H1215.62M1210.98 925.05H1215.62" fill="none" stroke="#ff00ff" stroke-width="1.3"/>
<path d="M1216.60 917.85H1218.63M1217.62 917.85V924.60M1216.60 921.00H1218.63M1216.60 925.05L1218.63 923.70M1219.21 918.75H1222.40M1220.08 916.50V925.50M1221.82 916.50V923.70M1219.21 922.80H1222.40M1220.08 920.10L1222.40 925.50" fill="none" stroke="#ff00ff" stroke-width="1.3"/>
<path d="M1234.00 917.85H1236.40M1235.20 917.85V924.60M1234.00 921.00H1236.40M1234.00 925.05L1236.40 923.70M1237.00 918.75H1240.00M1237.90 916.50V925.50M1239.40 916.50V923.70M1237.00 922.80H1240.00M1237.60 920.10L1240.00 925.50" fill="none" stroke="#ff00ff" stroke-width="1.3"/>
<path d="M1240.30 917.85H1242.40M1241.35 917.85V924.60M1240.30 921.00H1242.40M1240.30 925.05L1242.40 923.70M1243.00 917.40H1246.30M1243.00 917.40V921.45M1246.30 917.40V921.45M1243.00 921.45H1246.30M1243.00 925.05H1246.30M1244.65 921.45V925.50" fill="none" stroke="#ff00ff" stroke-width="1.3"/>
<path d="M1255.20 916.50V925.50M1254.00 919.20H1256.40M1254.00 922.35H1256.40M1257.00 918.30H1260.00M1257.00 921.45H1260.00M1257.00 924.60H1260.00M1258.50 916.50V925.50M1257.00 925.50L1258.50 921.90" fill="none" stroke="#ff00ff" stroke-width="1.3"/>
<path d="M1260.60 917.40H1266.00M1263.30 916.50V920.55M1261.20 920.55H1265.40M1263.30 921.00L1260.60 925.50M1263.30 921.00L1266.00 925.50M1260.30 922.80H1266.30" fill="none" stroke="#ff00ff" stroke-width="1.3"/>
<text x="1260.3" y="939.5" fill="#00ffff" font-size="8.5" font-family="Liberation Sans" text-anchor="middle" font-weight="normal" textLength="13" lengthAdjust="spacingAndGlyphs">1:1</text>
<path d="M1207.00 948.35H1213.00M1207.60 951.50H1212.40M1207.00 955.10H1213.00M1210.00 947.00V956.00M1208.20 952.40L1207.30 954.65" fill="none" stroke="#ff00ff" stroke-width="1.3"/>
<text x="1214" y="955" fill="#00ffff" font-size="8" font-family="Liberation Serif" text-anchor="start" font-weight="normal" textLength="8" lengthAdjust="spacingAndGlyphs">12</text>
<path d="M1224.30 947.90H1229.70M1227.00 947.00V951.05M1224.90 951.05H1229.10M1224.00 953.75H1230.00M1225.80 951.95V956.00M1228.20 951.95V956.00" fill="none" stroke="#ff00ff" stroke-width="1.3"/>
<path d="M1233.00 948.35H1239.00M1233.60 951.50H1238.40M1233.00 955.10H1239.00M1236.00 947.00V956.00M1234.20 952.40L1233.30 954.65" fill="none" stroke="#ff00ff" stroke-width="1.3"/>
<text x="1240" y="955" fill="#00ffff" font-size="8" font-family="Liberation Serif" text-anchor="start" font-weight="normal" textLength="4" lengthAdjust="spacingAndGlyphs">1</text>
<path d="M1248.30 947.90H1253.70M1251.00 947.00V951.05M1248.90 951.05H1253.10M1248.00 953.75H1254.00M1249.80 951.95V956.00M1252.20 951.95V956.00" fill="none" stroke="#ff00ff" stroke-width="1.3"/>
<text x="1293.5" y="910.7" fill="#00ffff" font-size="11" font-family="Liberation Sans" text-anchor="start" font-weight="normal" textLength="7" lengthAdjust="spacingAndGlyphs">K</text>
<path d="M1303.12 902.00V910.70M1302.00 904.61H1304.25M1302.00 907.65H1304.25M1305.00 902.87H1309.50M1305.00 902.87V906.78M1309.50 902.87V906.78M1305.00 906.78H1309.50M1305.00 910.26H1309.50M1307.25 906.78V910.70" fill="none" stroke="#00ffff" stroke-width="1"/>
<path d="M1310.70 903.30H1313.33M1312.01 903.30V909.83M1310.70 906.35H1313.33M1310.70 910.26L1313.33 908.96M1314.08 902.43V910.26M1318.20 902.43V910.26M1314.08 902.43H1318.20M1314.08 906.35H1318.20M1314.08 910.26H1318.20" fill="none" stroke="#00ffff" stroke-width="1"/>
<path d="M1319.40 903.30H1322.40M1320.90 903.30V909.83M1319.40 906.35H1322.40M1319.40 910.26L1322.40 908.96M1323.15 904.17H1326.90M1324.28 902.00V910.70M1326.15 902.00V908.96M1323.15 908.09H1326.90M1323.90 905.48L1326.90 910.70" fill="none" stroke="#00ffff" stroke-width="1"/>
<path d="M1279.00 916.14H1281.40M1280.20 916.14V921.84M1279.00 918.80H1281.40M1279.00 922.22L1281.40 921.08M1282.20 915.38V922.22M1287.00 915.38V922.22M1282.20 915.38H1287.00M1282.20 918.80H1287.00M1282.20 922.22H1287.00" fill="none" stroke="#00ffff" stroke-width="1"/>
<path d="M1290.12 915.00L1288.20 918.42M1289.28 917.66V922.60M1288.60 919.18H1290.60M1291.40 915.76H1296.20M1291.40 915.76V919.18M1296.20 915.76V919.18M1291.40 919.18H1296.20M1291.40 922.22H1296.20M1293.80 919.18V922.60" fill="none" stroke="#00ffff" stroke-width="1"/>
<path d="M1298.80 915.00V922.60M1297.40 917.28H1300.20M1297.40 919.94H1300.20M1301.00 915.76H1305.40M1301.00 915.76V919.18M1305.40 915.76V919.18M1301.00 919.18H1305.40M1301.00 922.22H1305.40M1303.20 919.18V922.60" fill="none" stroke="#00ffff" stroke-width="1"/>
<path d="M1308.00 915.00V922.60M1306.60 917.28H1309.40M1306.60 919.94H1309.40M1310.20 916.52H1314.60M1310.20 919.18H1314.60M1310.20 921.84H1314.60M1312.40 915.00V922.60M1310.20 922.60L1312.40 919.56" fill="none" stroke="#00ffff" stroke-width="1"/>
<path d="M1315.80 916.14H1323.80M1316.60 918.80H1323.00M1315.80 921.84H1323.80M1319.80 915.00V922.60M1317.40 919.56L1316.20 921.46" fill="none" stroke="#00ffff" stroke-width="1"/>
<path d="M1326.40 915.00V922.60M1325.00 917.28H1327.80M1325.00 919.94H1327.80M1328.60 915.38V922.22M1333.00 915.38V922.22M1328.60 915.38H1333.00M1328.60 918.80H1333.00M1328.60 922.22H1333.00" fill="none" stroke="#00ffff" stroke-width="1"/>
<path d="M1334.20 916.14H1342.20M1335.00 918.80H1341.40M1334.20 921.84H1342.20M1338.20 915.00V922.60M1335.80 919.56L1334.60 921.46" fill="none" stroke="#00ffff" stroke-width="1"/>
<text x="1273" y="949.3" fill="#00ffff" font-size="14.2" font-family="Liberation Serif" text-anchor="start" font-weight="normal" textLength="76.5" lengthAdjust="spacingAndGlyphs">R180-A11-00</text>
<path d="M278.00 61.85H285.20M281.60 61.00V64.83M278.80 64.83H284.40M277.60 67.38H285.60M280.00 65.67V69.50M283.20 65.67V69.50" fill="none" stroke="#00ffff" stroke-width="0.9"/>
<path d="M286.30 62.27H288.70M287.50 62.27V68.65M286.30 65.25H288.70M286.30 69.08L288.70 67.80M289.50 62.70H294.30M289.50 65.67H294.30M289.50 68.65H294.30M291.90 61.00V69.50M289.50 69.50L291.90 66.10" fill="none" stroke="#00ffff" stroke-width="0.9"/>
<path d="M297.40 61.85H304.60M301.00 61.00V64.83M298.20 64.83H303.80M297.80 66.10V69.50M304.20 66.10V69.50M297.80 66.10H304.20M297.80 69.08H304.20" fill="none" stroke="#00ffff" stroke-width="0.9"/>
<path d="M304.70 62.27H312.70M305.50 65.25H311.90M304.70 68.65H312.70M308.70 61.00V69.50M306.30 66.10L305.10 68.22" fill="none" stroke="#00ffff" stroke-width="0.9"/>
<polyline points="317,67.5 319,69.5" fill="none" stroke="#00ffff" stroke-width="1"/>
<path d="M325.60 61.85H332.80M329.20 61.00V64.83M326.40 64.83H332.00M326.00 66.10V69.50M332.40 66.10V69.50M326.00 66.10H332.40M326.00 69.08H332.40" fill="none" stroke="#00ffff" stroke-width="0.9"/>
<path d="M336.14 61.00L333.90 64.83M335.16 63.98V69.50M334.30 65.67H336.70M337.50 63.12H341.90M338.70 61.00V69.50M341.10 61.00V67.80M337.50 66.95H341.90M338.70 64.40L341.90 69.50" fill="none" stroke="#00ffff" stroke-width="0.9"/>
<path d="M345.44 61.00L343.20 64.83M344.46 63.98V69.50M343.60 65.67H346.00M346.80 63.12H351.20M348.00 61.00V69.50M350.40 61.00V67.80M346.80 66.95H351.20M348.00 64.40L351.20 69.50" fill="none" stroke="#00ffff" stroke-width="0.9"/>
<path d="M355.50 61.00V69.50M353.90 63.55H357.10M353.90 66.53H357.10M357.90 61.85H361.90M357.90 61.85V65.67M361.90 61.85V65.67M357.90 65.67H361.90M357.90 69.08H361.90M359.90 65.67V69.50" fill="none" stroke="#00ffff" stroke-width="0.9"/>
<path d="M362.10 62.27H364.90M363.50 62.27V68.65M362.10 65.25H364.90M362.10 69.08L364.90 67.80M365.70 61.42V69.08M370.10 61.42V69.08M365.70 61.42H370.10M365.70 65.25H370.10M365.70 69.08H370.10" fill="none" stroke="#00ffff" stroke-width="0.9"/>
<path d="M371.70 61.00V69.50M370.30 63.55H373.10M370.30 66.53H373.10M373.90 61.42V69.08M378.30 61.42V69.08M373.90 61.42H378.30M373.90 65.25H378.30M373.90 69.08H378.30" fill="none" stroke="#00ffff" stroke-width="0.9"/>
<polyline points="382.6,67.5 384.6,69.5" fill="none" stroke="#00ffff" stroke-width="1"/>
<path d="M392.72 61.00L390.80 64.83M391.88 63.98V69.50M391.20 65.67H393.20M394.00 62.70H398.80M394.00 65.67H398.80M394.00 68.65H398.80M396.40 61.00V69.50M394.00 69.50L396.40 66.10" fill="none" stroke="#00ffff" stroke-width="0.9"/>
<path d="M400.40 61.85H407.60M404.00 61.00V64.83M401.20 64.83H406.80M400.00 67.38H408.00M402.40 65.67V69.50M405.60 65.67V69.50" fill="none" stroke="#00ffff" stroke-width="0.9"/>
<clipPath id="h1"><path d="M249.5 305H282.5V401.5H315.5V434.5H216.5V401.5H249.5Z"/></clipPath>
<path clip-path="url(#h1)" d="M76 305L206 435M87 305L217 435M98 305L228 435M109 305L239 435M120 305L250 435M131 305L261 435M142 305L272 435M153 305L283 435M164 305L294 435M175 305L305 435M186 305L316 435M197 305L327 435M208 305L338 435M219 305L349 435M230 305L360 435M241 305L371 435M252 305L382 435M263 305L393 435M274 305L404 435M285 305L415 435M296 305L426 435M307 305L437 435" stroke="#00ffff" stroke-width="1" fill="none"/>
<clipPath id="h2"><path d="M439.5 305H472.5V401.5H506V434.5H406.5V418.5H437.8V401.5H439.5Z"/></clipPath>
<path clip-path="url(#h2)" d="M274 305L404 435M285 305L415 435M296 305L426 435M307 305L437 435M318 305L448 435M329 305L459 435M340 305L470 435M351 305L481 435M362 305L492 435M373 305L503 435M384 305L514 435M395 305L525 435M406 305L536 435M417 305L547 435M428 305L558 435M439 305L569 435M450 305L580 435M461 305L591 435M472 305L602 435M483 305L613 435M494 305L624 435M505 305L635 435" stroke="#00ffff" stroke-width="1" fill="none"/>

<clipPath id="h3"><path d="M200.6 445Q200.6 439.5 206 439.5H213.7Q216.4 439.5 216.4 434.4H315.7Q315.7 439.5 319.5 439.5H403Q406.3 439.5 406.3 434.4H506Q506 439.5 509.3 439.5H516Q521.8 439.5 521.8 445V489.5H200.6ZM224.5 489.5V463Q224.5 459.3 228 459.3H349.3Q352.8 459.3 352.8 463V481Q352.8 484.3 356 484.3H366Q370 484.3 370 481V463Q370 459.3 373.5 459.3H494Q497.3 459.3 497.3 463V489.5Z" clip-rule="evenodd"/></clipPath>
<path clip-path="url(#h3)" d="M134.40 490L190.40 434M145.40 490L201.40 434M156.40 490L212.40 434M167.40 490L223.40 434M178.40 490L234.40 434M189.40 490L245.40 434M200.40 490L256.40 434M211.40 490L267.40 434M222.40 490L278.40 434M233.40 490L289.40 434M244.40 490L300.40 434M255.40 490L311.40 434M266.40 490L322.40 434M277.40 490L333.40 434M288.40 490L344.40 434M299.40 490L355.40 434M310.40 490L366.40 434M321.40 490L377.40 434M332.40 490L388.40 434M343.40 490L399.40 434M354.40 490L410.40 434M365.40 490L421.40 434M376.40 490L432.40 434M387.40 490L443.40 434M398.40 490L454.40 434M409.40 490L465.40 434M420.40 490L476.40 434M431.40 490L487.40 434M442.40 490L498.40 434M453.40 490L509.40 434M464.40 490L520.40 434M475.40 490L531.40 434M486.40 490L542.40 434M497.40 490L553.40 434M508.40 490L564.40 434M519.40 490L575.40 434" stroke="#00ffff" stroke-width="1" fill="none"/>
<rect x="289.5" y="124.5" width="43" height="12" fill="none" stroke="#00ff00" stroke-width="1"/>
<rect x="290.5" y="136.5" width="40" height="8" fill="none" stroke="#00ff00" stroke-width="1"/>
<rect x="375.5" y="124.5" width="42" height="12" fill="none" stroke="#00ff00" stroke-width="1"/>
<rect x="376.5" y="136.5" width="40" height="8" fill="none" stroke="#00ff00" stroke-width="1"/>
<path d="M282.5 220.5V144.5H426.5V220.5" fill="none" stroke="#00ff00" stroke-width="1"/>
<line x1="282.5" y1="173.5" x2="426.5" y2="173.5" stroke="#00ff00" stroke-width="1"/>
<rect x="297.5" y="173.5" width="26" height="14" fill="none" stroke="#00ff00" stroke-width="1"/>
<rect x="383.5" y="173.5" width="26" height="14" fill="none" stroke="#00ff00" stroke-width="1"/>
<path d="M228.5 220.5V149.5H241.5V198.5H264.5V149.5H277.5V220.5" fill="none" stroke="#00ff00" stroke-width="1"/>
<path d="M431.5 220.5V149.5H444.5V198.5H467.5V149.5H480.5V215.5" fill="none" stroke="#00ff00" stroke-width="1"/>
<line x1="228" y1="220.5" x2="282.5" y2="220.5" stroke="#00ff00" stroke-width="1"/>
<line x1="426.5" y1="220.5" x2="479.5" y2="220.5" stroke="#00ff00" stroke-width="1"/>
<line x1="426.5" y1="215.5" x2="480.5" y2="215.5" stroke="#00ff00" stroke-width="1"/>
<line x1="252" y1="215.5" x2="282.5" y2="215.5" stroke="#00ff00" stroke-width="1"/>
<path d="M228.2 220.5L224.5 223.5V401.5" fill="none" stroke="#00ff00" stroke-width="1"/>
<path d="M479.5 220.5L483.5 223.5V401.5" fill="none" stroke="#00ff00" stroke-width="1"/>
<path d="M249.5 269.5V401.5H216.5V434.5H315.5V401.5H282.5V207" fill="none" stroke="#00ff00" stroke-width="1"/>
<line x1="249.5" y1="269.5" x2="282.5" y2="269.5" stroke="#00ff00" stroke-width="1"/>
<line x1="249.5" y1="284.5" x2="282.5" y2="284.5" stroke="#00ff00" stroke-width="1"/>
<line x1="249.5" y1="299.5" x2="282.5" y2="299.5" stroke="#00ff00" stroke-width="1"/>
<line x1="249.5" y1="305.5" x2="282.5" y2="305.5" stroke="#00ff00" stroke-width="1"/>
<path d="M282.5 280V386" fill="none" stroke="#00ff00" stroke-width="1"/>
<path d="M472.5 269.5V401.5H506V434.5H406.5V401.5H439.5V269.5Z" fill="none" stroke="#00ff00" stroke-width="1"/>
<line x1="439.5" y1="284.5" x2="472.5" y2="284.5" stroke="#00ff00" stroke-width="1"/>
<line x1="439.5" y1="299.5" x2="472.5" y2="299.5" stroke="#00ff00" stroke-width="1"/>
<line x1="439.5" y1="305.5" x2="472.5" y2="305.5" stroke="#00ff00" stroke-width="1"/>
<line x1="426.5" y1="144.5" x2="426.5" y2="305" stroke="#00ff00" stroke-width="1"/>
<path d="M216.4 434.4Q216.4 439.5 213.7 439.5H206Q200.6 439.5 200.6 445V489.5H521.8V445Q521.8 439.5 516 439.5H509.3Q506 439.5 506 434.4" fill="none" stroke="#00ff00" stroke-width="1"/>
<path d="M315.7 434.4Q315.7 439.5 319.5 439.5H403Q406.3 439.5 406.3 434.4" fill="none" stroke="#00ff00" stroke-width="1"/>
<path d="M224.5 489.5V463Q224.5 459.3 228 459.3H349.3Q352.8 459.3 352.8 463V481Q352.8 484.3 356 484.3H366Q370 484.3 370 481V463Q370 459.3 373.5 459.3H494Q497.3 459.3 497.3 463V489.5" fill="none" stroke="#00ff00" stroke-width="1"/>
<path d="M224.5 489Q224.5 484.3 229.5 484.3H352.8M370 484.3H494Q497.3 484.3 497.3 489" fill="none" stroke="#00ff00" stroke-width="1"/>
<rect x="408.8" y="401.4" width="29" height="17.2" fill="#212830" stroke="#00ff00" stroke-width="1"/>
<path d="M413.5 418.6V459.3M431.3 418.6V459.3" fill="none" stroke="#00ff00" stroke-width="1"/>
<rect x="414" y="419" width="17" height="40" fill="#212830"/>
<path d="M413.5 418.6V459.3M431.3 418.6V459.3M413.5 457.3H431.3" fill="none" stroke="#00ff00" stroke-width="1"/>
<path d="M416 419V457M429.4 419V457" fill="none" stroke="#00ffff" stroke-width="1"/>
<rect x="483.5" y="401.5" width="12" height="58" fill="#212830"/>
<path d="M483.2 401.4V456Q489.4 461 495.6 456V401.4M483.2 404H495.6" fill="none" stroke="#00ff00" stroke-width="1"/>
<line x1="483.5" y1="305" x2="483.5" y2="401.5" stroke="#00ff00" stroke-width="1"/>
<path d="M472.5 401.5Q470 415 473 428Q474 440 470 459" fill="none" stroke="#00ffff" stroke-width="1"/>
<line x1="310.5" y1="125" x2="310.5" y2="203" stroke="#ff0000" stroke-width="1" stroke-dasharray="40 3.8 1.2 3.8"/>
<line x1="396.5" y1="125" x2="396.5" y2="203" stroke="#ff0000" stroke-width="1" stroke-dasharray="40 3.8 1.2 3.8"/>
<line x1="252.5" y1="129" x2="252.5" y2="220" stroke="#ff0000" stroke-width="1" stroke-dasharray="40 3.8 1.2 3.8"/>
<line x1="455.5" y1="131" x2="455.5" y2="220" stroke="#ff0000" stroke-width="1" stroke-dasharray="40 3.8 1.2 3.8"/>
<line x1="233.5" y1="386" x2="233.5" y2="470" stroke="#ff0000" stroke-width="1" stroke-dasharray="40 3.8 1.2 3.8"/>
<line x1="299.5" y1="386" x2="299.5" y2="470" stroke="#ff0000" stroke-width="1" stroke-dasharray="40 3.8 1.2 3.8"/>
<line x1="422.5" y1="387" x2="422.5" y2="470" stroke="#ff0000" stroke-width="1" stroke-dasharray="40 3.8 1.2 3.8"/>
<line x1="488.5" y1="386" x2="488.5" y2="470" stroke="#ff0000" stroke-width="1" stroke-dasharray="40 3.8 1.2 3.8"/>
<line x1="361.5" y1="432" x2="361.5" y2="493" stroke="#ff0000" stroke-width="1" stroke-dasharray="40 3.8 1.2 3.8"/>
<line x1="215" y1="173.5" x2="282" y2="173.5" stroke="#ff0000" stroke-width="1" stroke-dasharray="40 3.8 1.2 3.8"/>
<line x1="426.5" y1="173.5" x2="509.5" y2="173.5" stroke="#ff0000" stroke-width="1" stroke-dasharray="40 3.8 1.2 3.8"/>
<line x1="205" y1="256.5" x2="615" y2="256.5" stroke="#ff0000" stroke-width="1" stroke-dasharray="40 3.8 1.2 3.8"/>
<line x1="283" y1="322.5" x2="438" y2="322.5" stroke="#ff0000" stroke-width="1" stroke-dasharray="40 3.8 1.2 3.8"/>
<path d="M282.5 207Q287 207 290.5 203.5H300.5" fill="none" stroke="#ffffff" stroke-width="1"/>
<line x1="315" y1="203.5" x2="326.5" y2="203.5" stroke="#ffffff" stroke-width="1"/>
<line x1="326.5" y1="203.5" x2="326.5" y2="272.2" stroke="#ffffff" stroke-width="1" stroke-dasharray="14 3 1.2 3 1.2 3"/>
<path d="M326.5 272.2H328.1V280Q328.1 285.2 333 285.2H346.8" fill="none" stroke="#ffffff" stroke-width="1"/>
<line x1="346.8" y1="285.2" x2="361.2" y2="285.2" stroke="#ffffff" stroke-width="1" stroke-dasharray="4 3 1 3"/>
<path d="M380.2 203.5V272.2Q380.2 285.2 374.9 285.2H361.2" fill="none" stroke="#ffffff" stroke-width="1" stroke-dasharray="60 3 1.2 3 1.2 3"/>
<path d="M380.2 203.5H392.6" fill="none" stroke="#ffffff" stroke-width="1"/>
<path d="M406.3 203.5H418.5Q422 206.8 425.9 206.8" fill="none" stroke="#ffffff" stroke-width="1"/>
<line x1="290.5" y1="203.5" x2="290.5" y2="330" stroke="#ffffff" stroke-width="1" stroke-dasharray="24 3.5 1 3.5 1 3.5"/>
<line x1="413.5" y1="203.5" x2="413.5" y2="330" stroke="#ffffff" stroke-width="1" stroke-dasharray="24 3.5 1 3.5 1 3.5"/>
<line x1="426.5" y1="221" x2="426.5" y2="297.3" stroke="#ffffff" stroke-width="1" stroke-dasharray="24 3.5 1 3.5 1 3.5"/>
<path d="M283.3 305.1Q290.2 307 290.2 314.5L316 356Q318 360 322 360H334" fill="none" stroke="#ffffff" stroke-width="1" stroke-dasharray="40 3 1.2 3 1.2 3"/>
<path d="M426.5 305Q413.5 307 413.5 314.5L390 356Q388 360 384 360H372" fill="none" stroke="#ffffff" stroke-width="1" stroke-dasharray="40 3 1.2 3 1.2 3"/>
<line x1="334" y1="360" x2="372" y2="360" stroke="#ffffff" stroke-width="1" stroke-dasharray="8 3 1.2 3 1.2 3"/>
<line x1="426.5" y1="297.3" x2="477.6" y2="297.3" stroke="#ffffff" stroke-width="1" stroke-dasharray="30 3 1.2 3 1.2 3"/>
<line x1="252.2" y1="215.5" x2="282" y2="215.5" stroke="#ffffff" stroke-width="1"/>
<line x1="252.2" y1="297.3" x2="282" y2="297.3" stroke="#ffffff" stroke-width="1"/>
<path d="M229.7 249.8V225Q229.7 223.4 231.5 223.4H245.5V249.8M229.7 263V287.8Q229.7 289.4 231.5 289.4H245.5V263" fill="none" stroke="#ffffff" stroke-width="1"/>
<line x1="229.7" y1="252.8" x2="229.7" y2="253.8" stroke="#ffffff" stroke-width="1.2"/>
<line x1="245.5" y1="252.8" x2="245.5" y2="253.8" stroke="#ffffff" stroke-width="1.2"/>
<line x1="229.7" y1="257.8" x2="229.7" y2="258.8" stroke="#ffffff" stroke-width="1.2"/>
<line x1="245.5" y1="257.8" x2="245.5" y2="258.8" stroke="#ffffff" stroke-width="1.2"/>
<path d="M245.5 225.6H250.6M245.5 287.3H250.6" fill="none" stroke="#ffffff" stroke-width="1"/>
<path d="M250.6 216V231.8M250.6 246.1V266.5M250.6 281.3V297" fill="none" stroke="#ffffff" stroke-width="1"/>
<line x1="250.6" y1="235.9" x2="250.6" y2="236.9" stroke="#ffffff" stroke-width="1"/>
<line x1="250.6" y1="241.0" x2="250.6" y2="242.0" stroke="#ffffff" stroke-width="1"/>
<line x1="250.6" y1="270.6" x2="250.6" y2="271.6" stroke="#ffffff" stroke-width="1"/>
<line x1="250.6" y1="276.0" x2="250.6" y2="277.0" stroke="#ffffff" stroke-width="1"/>
<path d="M252.4 216V231.8M252.4 246.1V266.5M252.4 281.3V297" fill="none" stroke="#ffffff" stroke-width="1"/>
<line x1="252.4" y1="235.9" x2="252.4" y2="236.9" stroke="#ffffff" stroke-width="1"/>
<line x1="252.4" y1="241.0" x2="252.4" y2="242.0" stroke="#ffffff" stroke-width="1"/>
<line x1="252.4" y1="270.6" x2="252.4" y2="271.6" stroke="#ffffff" stroke-width="1"/>
<line x1="252.4" y1="276.0" x2="252.4" y2="277.0" stroke="#ffffff" stroke-width="1"/>
<line x1="478.2" y1="216.8" x2="478.2" y2="295.8" stroke="#ffffff" stroke-width="1.6" stroke-dasharray="30 3 1.2 3 1.2 3"/>
<path d="M479.4 219.3H503L574.5 224.5" fill="none" stroke="#ffffff" stroke-width="1" stroke-dasharray="34.6 3.5 1 3.5 1 3.5 21.5 3.5 1 3.5 1 3.5 14"/>
<path d="M479.4 293.3H503L574.5 288.8" fill="none" stroke="#ffffff" stroke-width="1" stroke-dasharray="34.6 3.5 1 3.5 1 3.5 21.5 3.5 1 3.5 1 3.5 14"/>
<path d="M575 225Q577 231 581.9 226.2H606.3L609 229.1V249M609 263V283.8L606.3 286.7H581.9Q577 282 575 288" fill="none" stroke="#ffffff" stroke-width="1"/>
<path d="M574.5 225V249M574.5 263V288.5" fill="none" stroke="#ffffff" stroke-width="1"/>
<path d="M581.9 225V249M581.9 263V288.5" fill="none" stroke="#ffffff" stroke-width="1"/>
<path d="M606.3 225V249M606.3 263V288.5" fill="none" stroke="#ffffff" stroke-width="1"/>
<line x1="574.5" y1="252.0" x2="574.5" y2="253.0" stroke="#ffffff" stroke-width="1"/>
<line x1="574.5" y1="259.0" x2="574.5" y2="260.0" stroke="#ffffff" stroke-width="1"/>
<line x1="581.9" y1="252.0" x2="581.9" y2="253.0" stroke="#ffffff" stroke-width="1"/>
<line x1="581.9" y1="259.0" x2="581.9" y2="260.0" stroke="#ffffff" stroke-width="1"/>
<line x1="606.3" y1="252.0" x2="606.3" y2="253.0" stroke="#ffffff" stroke-width="1"/>
<line x1="606.3" y1="259.0" x2="606.3" y2="260.0" stroke="#ffffff" stroke-width="1"/>
<line x1="609" y1="252.0" x2="609" y2="253.0" stroke="#ffffff" stroke-width="1"/>
<line x1="609" y1="259.0" x2="609" y2="260.0" stroke="#ffffff" stroke-width="1"/>
<line x1="502.5" y1="219.3" x2="502.5" y2="293.3" stroke="#ffffff" stroke-width="1" stroke-dasharray="24 3.5 1 3.5 1 3.5"/>
<line x1="116.5" y1="124.5" x2="289.5" y2="124.5" stroke="#00ffff" stroke-width="1"/>
<line x1="116.5" y1="124.5" x2="116.5" y2="489.5" stroke="#00ffff" stroke-width="1"/>
<line x1="110" y1="489.5" x2="200.6" y2="489.5" stroke="#00ffff" stroke-width="1"/>
<polygon points="116.5,124.5 115.1,128.5 117.9,128.5" fill="#00ffff" stroke="#00ffff" stroke-width="0.5"/>
<polygon points="116.5,489.5 115.1,485.5 117.9,485.5" fill="#00ffff" stroke="#00ffff" stroke-width="0.5"/>
<text x="114.5" y="307.5" fill="#00ffff" font-size="9" font-family="Liberation Sans" text-anchor="middle" font-weight="normal" textLength="14" lengthAdjust="spacingAndGlyphs" transform="rotate(-90 114.5 307.5)">220</text>
<line x1="310.5" y1="110.5" x2="396.5" y2="110.5" stroke="#00ffff" stroke-width="1"/>
<polygon points="310.5,110.5 314.5,109.1 314.5,111.9" fill="#00ffff" stroke="#00ffff" stroke-width="0.5"/>
<polygon points="396.5,110.5 392.5,109.1 392.5,111.9" fill="#00ffff" stroke="#00ffff" stroke-width="0.5"/>
<line x1="310.5" y1="108" x2="310.5" y2="125" stroke="#00ffff" stroke-width="1"/>
<line x1="396.5" y1="108" x2="396.5" y2="125" stroke="#00ffff" stroke-width="1"/>
<rect x="345.5" y="100.5" width="16" height="10" fill="none" stroke="#00ffff" stroke-width="1"/>
<text x="352.3" y="109" fill="#00ffff" font-size="9" font-family="Liberation Sans" text-anchor="middle" font-weight="normal" textLength="9.5" lengthAdjust="spacingAndGlyphs">52</text>
<line x1="282.5" y1="277.5" x2="310.5" y2="277.5" stroke="#00ffff" stroke-width="1"/>
<polygon points="282.5,277.5 286.5,276.1 286.5,278.9" fill="#00ffff" stroke="#00ffff" stroke-width="0.5"/>
<polygon points="310.5,277.5 306.5,276.1 306.5,278.9" fill="#00ffff" stroke="#00ffff" stroke-width="0.5"/>
<line x1="310.5" y1="203.5" x2="310.5" y2="280" stroke="#00ffff" stroke-width="1"/>
<line x1="282.5" y1="207" x2="282.5" y2="280" stroke="#00ffff" stroke-width="1"/>
<text x="295.8" y="274.5" fill="#00ffff" font-size="8.5" font-family="Liberation Sans" text-anchor="middle" font-weight="normal" textLength="8.5" lengthAdjust="spacingAndGlyphs">17</text>
<line x1="282.5" y1="386.5" x2="439.5" y2="386.5" stroke="#00ffff" stroke-width="1"/>
<polygon points="282.5,386.5 286.5,385.1 286.5,387.9" fill="#00ffff" stroke="#00ffff" stroke-width="0.5"/>
<polygon points="439.5,386.5 435.5,385.1 435.5,387.9" fill="#00ffff" stroke="#00ffff" stroke-width="0.5"/>
<text x="360" y="384" fill="#00ffff" font-size="8.5" font-family="Liberation Sans" text-anchor="middle" font-weight="normal" textLength="9" lengthAdjust="spacingAndGlyphs">95</text>
<line x1="200.6" y1="513.5" x2="521.5" y2="513.5" stroke="#00ffff" stroke-width="1"/>
<polygon points="200.6,513.5 204.6,512.1 204.6,514.9" fill="#00ffff" stroke="#00ffff" stroke-width="0.5"/>
<polygon points="521.5,513.5 517.5,512.1 517.5,514.9" fill="#00ffff" stroke="#00ffff" stroke-width="0.5"/>
<line x1="200.6" y1="489.5" x2="200.6" y2="517" stroke="#00ffff" stroke-width="1"/>
<line x1="521.5" y1="489.5" x2="521.5" y2="517" stroke="#00ffff" stroke-width="1"/>
<text x="360" y="512" fill="#00ffff" font-size="8.5" font-family="Liberation Sans" text-anchor="middle" font-weight="normal" textLength="13.5" lengthAdjust="spacingAndGlyphs">195</text>
<line x1="202.5" y1="189.5" x2="202.5" y2="297.3" stroke="#00ffff" stroke-width="1"/>
<polygon points="202.5,215.5 201.1,219.5 203.9,219.5" fill="#00ffff" stroke="#00ffff" stroke-width="0.5"/>
<polygon points="202.5,297.3 201.1,293.3 203.9,293.3" fill="#00ffff" stroke="#00ffff" stroke-width="0.5"/>
<line x1="200.6" y1="215.5" x2="252" y2="215.5" stroke="#00ffff" stroke-width="1"/>
<line x1="200.6" y1="297.3" x2="252" y2="297.3" stroke="#00ffff" stroke-width="1"/>
<text x="199.5" y="258" fill="#00ffff" font-size="8.8" font-family="Liberation Sans" text-anchor="middle" font-weight="normal" textLength="26" lengthAdjust="spacingAndGlyphs" transform="rotate(-90 199.5 258)">ø50.2</text>
<line x1="197" y1="189.5" x2="202.5" y2="189.5" stroke="#00ffff" stroke-width="1"/>
<line x1="630.5" y1="189.5" x2="630.5" y2="297.3" stroke="#00ffff" stroke-width="1"/>
<polygon points="630.5,215.5 629.1,219.5 631.9,219.5" fill="#00ffff" stroke="#00ffff" stroke-width="0.5"/>
<polygon points="630.5,297.3 629.1,293.3 631.9,293.3" fill="#00ffff" stroke="#00ffff" stroke-width="0.5"/>
<line x1="477.6" y1="215.5" x2="630.5" y2="215.5" stroke="#00ffff" stroke-width="1"/>
<line x1="477.6" y1="297.3" x2="630.5" y2="297.3" stroke="#00ffff" stroke-width="1"/>
<text x="627.5" y="258" fill="#00ffff" font-size="8.8" font-family="Liberation Sans" text-anchor="middle" font-weight="normal" textLength="26" lengthAdjust="spacingAndGlyphs" transform="rotate(-90 627.5 258)">ø50.2</text>
<line x1="622.7" y1="189.5" x2="630.5" y2="189.5" stroke="#00ffff" stroke-width="1"/>
<rect x="128.5" y="176.5" width="69" height="13" fill="none" stroke="#00ffff" stroke-width="1"/>
<rect x="128.5" y="189.5" width="51" height="14" fill="none" stroke="#00ffff" stroke-width="1"/>
<line x1="145.5" y1="176.5" x2="145.5" y2="203.5" stroke="#00ffff" stroke-width="1"/>
<line x1="177.5" y1="176.5" x2="177.5" y2="189.5" stroke="#00ffff" stroke-width="1"/>
<line x1="168.5" y1="189.5" x2="168.5" y2="203.5" stroke="#00ffff" stroke-width="1"/>
<circle cx="136.8" cy="183.3" r="5" fill="none" stroke="#00ffff" stroke-width="1"/>
<circle cx="136.8" cy="183.3" r="3" fill="none" stroke="#00ffff" stroke-width="1"/>
<circle cx="150.3" cy="183.5" r="3.6" fill="none" stroke="#00ffff" stroke-width="1"/>
<line x1="147.0" y1="189.0" x2="154.0" y2="178.0" stroke="#00ffff" stroke-width="1"/>
<text x="155.3" y="187.5" fill="#00ffff" font-size="8.8" font-family="Liberation Sans" text-anchor="start" font-weight="normal" textLength="17.5" lengthAdjust="spacingAndGlyphs">0.02</text>
<text x="179.0" y="187.5" fill="#00ffff" font-size="8.8" font-family="Liberation Sans" text-anchor="start" font-weight="normal" textLength="14" lengthAdjust="spacingAndGlyphs">C-D</text>
<line x1="131.5" y1="201.5" x2="136.5" y2="192.0" stroke="#00ffff" stroke-width="1"/>
<line x1="135.5" y1="201.5" x2="140.5" y2="192.0" stroke="#00ffff" stroke-width="1"/>
<text x="147.3" y="201.0" fill="#00ffff" font-size="8.8" font-family="Liberation Sans" text-anchor="start" font-weight="normal" textLength="18" lengthAdjust="spacingAndGlyphs">0. 01</text>
<text x="171.3" y="201.0" fill="#00ffff" font-size="8.8" font-family="Liberation Sans" text-anchor="start" font-weight="normal" textLength="5.2" lengthAdjust="spacingAndGlyphs">A</text>
<rect x="553.5" y="176.5" width="69" height="13" fill="none" stroke="#00ffff" stroke-width="1"/>
<rect x="553.5" y="189.5" width="51" height="14" fill="none" stroke="#00ffff" stroke-width="1"/>
<line x1="570.5" y1="176.5" x2="570.5" y2="203.5" stroke="#00ffff" stroke-width="1"/>
<line x1="602.5" y1="176.5" x2="602.5" y2="189.5" stroke="#00ffff" stroke-width="1"/>
<line x1="593.5" y1="189.5" x2="593.5" y2="203.5" stroke="#00ffff" stroke-width="1"/>
<circle cx="561.8" cy="183.3" r="5" fill="none" stroke="#00ffff" stroke-width="1"/>
<circle cx="561.8" cy="183.3" r="3" fill="none" stroke="#00ffff" stroke-width="1"/>
<circle cx="575.3" cy="183.5" r="3.6" fill="none" stroke="#00ffff" stroke-width="1"/>
<line x1="572.0" y1="189.0" x2="579.0" y2="178.0" stroke="#00ffff" stroke-width="1"/>
<text x="580.3" y="187.5" fill="#00ffff" font-size="8.8" font-family="Liberation Sans" text-anchor="start" font-weight="normal" textLength="17.5" lengthAdjust="spacingAndGlyphs">0.02</text>
<text x="604.0" y="187.5" fill="#00ffff" font-size="8.8" font-family="Liberation Sans" text-anchor="start" font-weight="normal" textLength="14" lengthAdjust="spacingAndGlyphs">C-D</text>
<line x1="556.5" y1="201.5" x2="561.5" y2="192.0" stroke="#00ffff" stroke-width="1"/>
<line x1="560.5" y1="201.5" x2="565.5" y2="192.0" stroke="#00ffff" stroke-width="1"/>
<text x="572.3" y="201.0" fill="#00ffff" font-size="8.8" font-family="Liberation Sans" text-anchor="start" font-weight="normal" textLength="18" lengthAdjust="spacingAndGlyphs">0. 01</text>
<text x="596.3" y="201.0" fill="#00ffff" font-size="8.8" font-family="Liberation Sans" text-anchor="start" font-weight="normal" textLength="5.2" lengthAdjust="spacingAndGlyphs">A</text>
<line x1="198.5" y1="299.5" x2="206.5" y2="299.5" stroke="#00ffff" stroke-width="1"/>
<line x1="202.5" y1="299.5" x2="202.5" y2="303.5" stroke="#00ffff" stroke-width="1"/>
<circle cx="202.5" cy="308.5" r="5.2" fill="none" stroke="#00ffff" stroke-width="1"/>
<text x="202.5" y="311.5" fill="#00ffff" font-size="7" font-family="Liberation Sans" text-anchor="middle" font-weight="normal" textLength="4.5" lengthAdjust="spacingAndGlyphs">C</text>
<line x1="626.5" y1="299.5" x2="634.5" y2="299.5" stroke="#00ffff" stroke-width="1"/>
<line x1="630.5" y1="299.5" x2="630.5" y2="303.5" stroke="#00ffff" stroke-width="1"/>
<circle cx="630.5" cy="308.5" r="5.2" fill="none" stroke="#00ffff" stroke-width="1"/>
<text x="630.5" y="311.5" fill="#00ffff" font-size="7" font-family="Liberation Sans" text-anchor="middle" font-weight="normal" textLength="4.5" lengthAdjust="spacingAndGlyphs">D</text>
<line x1="208" y1="494" x2="216" y2="494" stroke="#00ffff" stroke-width="1"/>
<line x1="212" y1="494" x2="212" y2="498" stroke="#00ffff" stroke-width="1"/>
<circle cx="212" cy="503" r="5.2" fill="none" stroke="#00ffff" stroke-width="1"/>
<text x="212" y="506" fill="#00ffff" font-size="7" font-family="Liberation Sans" text-anchor="middle" font-weight="normal" textLength="4.5" lengthAdjust="spacingAndGlyphs">A</text>
<line x1="285.5" y1="294.5" x2="285.5" y2="303.5" stroke="#00ffff" stroke-width="1"/>
<line x1="285.5" y1="299" x2="288" y2="299" stroke="#00ffff" stroke-width="1"/>
<circle cx="293.3" cy="298.9" r="5.2" fill="none" stroke="#00ffff" stroke-width="1"/>
<text x="293.3" y="301.8" fill="#00ffff" font-size="7" font-family="Liberation Sans" text-anchor="middle" font-weight="normal" textLength="4.5" lengthAdjust="spacingAndGlyphs">B</text>
<line x1="685.5" y1="308.5" x2="711" y2="308.5" stroke="#00ffff" stroke-width="1"/>
<line x1="685.5" y1="308.5" x2="461" y2="368" stroke="#00ffff" stroke-width="1"/>
<circle cx="461" cy="368" r="0.9" fill="#00ffff" stroke="#00ffff" stroke-width="1"/>
<text x="698" y="307.7" fill="#00ffff" font-size="8.5" font-family="Liberation Serif" text-anchor="middle" font-weight="normal" textLength="4.5" lengthAdjust="spacingAndGlyphs">4</text>
<line x1="685.5" y1="342.5" x2="711" y2="342.5" stroke="#00ffff" stroke-width="1"/>
<line x1="685.5" y1="342.5" x2="420.3" y2="413.6" stroke="#00ffff" stroke-width="1"/>
<circle cx="420.3" cy="413.6" r="0.9" fill="#00ffff" stroke="#00ffff" stroke-width="1"/>
<text x="698" y="341.7" fill="#00ffff" font-size="8.5" font-family="Liberation Serif" text-anchor="middle" font-weight="normal" textLength="4.5" lengthAdjust="spacingAndGlyphs">3</text>
<line x1="685.5" y1="376.5" x2="711" y2="376.5" stroke="#00ffff" stroke-width="1"/>
<line x1="685.5" y1="376.5" x2="488.5" y2="429.8" stroke="#00ffff" stroke-width="1"/>
<circle cx="488.5" cy="429.8" r="0.9" fill="#00ffff" stroke="#00ffff" stroke-width="1"/>
<text x="698" y="375.7" fill="#00ffff" font-size="8.5" font-family="Liberation Serif" text-anchor="middle" font-weight="normal" textLength="4.5" lengthAdjust="spacingAndGlyphs">2</text>
<line x1="685.5" y1="427.5" x2="711" y2="427.5" stroke="#00ffff" stroke-width="1"/>
<line x1="685.5" y1="427.5" x2="516.8" y2="473.1" stroke="#00ffff" stroke-width="1"/>
<circle cx="516.8" cy="473.1" r="0.9" fill="#00ffff" stroke="#00ffff" stroke-width="1"/>
<text x="698" y="426.7" fill="#00ffff" font-size="8.5" font-family="Liberation Serif" text-anchor="middle" font-weight="normal" textLength="4.5" lengthAdjust="spacingAndGlyphs">1</text>
<clipPath id="h4"><path d="M837.5 444Q837.5 439.4 842 439.4H874.7Q878.6 439.4 878.6 435V262H895.5V435Q895.5 439.4 900 439.4H996.6Q999.4 439.4 999.4 435V429H1048.2V435Q1048.2 439.4 1052.6 439.4H1065Q1069 439.4 1069 444V489.4H837.5ZM867 489.4V463Q867 459.1 871 459.1H996Q999.9 459.1 999.9 463V489.4ZM1014.1 429.5H1032.8V489.4H1014.1Z" clip-rule="evenodd"/></clipPath>
<path clip-path="url(#h4)" d="M602.00 490L830.00 262M613.00 490L841.00 262M624.00 490L852.00 262M635.00 490L863.00 262M646.00 490L874.00 262M657.00 490L885.00 262M668.00 490L896.00 262M679.00 490L907.00 262M690.00 490L918.00 262M701.00 490L929.00 262M712.00 490L940.00 262M723.00 490L951.00 262M734.00 490L962.00 262M745.00 490L973.00 262M756.00 490L984.00 262M767.00 490L995.00 262M778.00 490L1006.00 262M789.00 490L1017.00 262M800.00 490L1028.00 262M811.00 490L1039.00 262M822.00 490L1050.00 262M833.00 490L1061.00 262M844.00 490L1072.00 262M855.00 490L1083.00 262M866.00 490L1094.00 262M877.00 490L1105.00 262M888.00 490L1116.00 262M899.00 490L1127.00 262M910.00 490L1138.00 262M921.00 490L1149.00 262M932.00 490L1160.00 262M943.00 490L1171.00 262M954.00 490L1182.00 262M965.00 490L1193.00 262M976.00 490L1204.00 262M987.00 490L1215.00 262M998.00 490L1226.00 262M1009.00 490L1237.00 262M1020.00 490L1248.00 262M1031.00 490L1259.00 262M1042.00 490L1270.00 262M1053.00 490L1281.00 262M1064.00 490L1292.00 262" stroke="#00ffff" stroke-width="1" fill="none"/>
<clipPath id="h5"><path d="M837.5 220H860.6V261.6H837.5Z"/></clipPath>
<path clip-path="url(#h5)" d="M786 262L828 220M797 262L839 220M808 262L850 220M819 262L861 220M830 262L872 220M841 262L883 220M852 262L894 220" stroke="#00ffff" stroke-width="1" fill="none"/>
<clipPath id="h6"><path d="M880.9 215.2H895.8V290Q896 298.8 900 298.8V313H878.6V269.7Q878.4 262 870.9 261.6H880.9Z"/></clipPath>
<path clip-path="url(#h6)" d="M778 314L877 215M789 314L888 215M800 314L899 215M811 314L910 215M822 314L921 215M833 314L932 215M844 314L943 215M855 314L954 215M866 314L965 215M877 314L976 215M888 314L987 215M899 314L998 215" stroke="#00ffff" stroke-width="1" fill="none"/>
<clipPath id="h7"><path d="M878.6 331.7H900V346Q895.5 348 895.5 352V435H878.6Z"/></clipPath>
<path clip-path="url(#h7)" d="M767 435L871 331M778 435L882 331M789 435L893 331M800 435L904 331M811 435L915 331M822 435L926 331M833 435L937 331M844 435L948 331M855 435L959 331M866 435L970 331M877 435L981 331M888 435L992 331M899 435L1003 331" stroke="#00ffff" stroke-width="1" fill="none"/>
<clipPath id="h8"><path d="M845.5 198.1H895.3V208Q870 206 845.5 208.5Z"/></clipPath>
<path clip-path="url(#h8)" d="M830 209L841 198M836 209L847 198M842 209L853 198M848 209L859 198M854 209L865 198M860 209L871 198M866 209L877 198M872 209L883 198M878 209L889 198M884 209L895 198M890 209L901 198M896 209L907 198" stroke="#00ffff" stroke-width="1" fill="none"/>
<clipPath id="h9"><path d="M845.5 215.2H860.6V220H845.5ZM880.9 215.2H895.8V220H880.9Z"/></clipPath>
<path clip-path="url(#h9)" d="M839.0 215L844.0 220M842.5 215L847.5 220M846.0 215L851.0 220M849.5 215L854.5 220M853.0 215L858.0 220M856.5 215L861.5 220M860.0 215L865.0 220M863.5 215L868.5 220M867.0 215L872.0 220M870.5 215L875.5 220M874.0 215L879.0 220M877.5 215L882.5 220M881.0 215L886.0 220M884.5 215L889.5 220M888.0 215L893.0 220M891.5 215L896.5 220M895.0 215L900.0 220" stroke="#00ffff" stroke-width="1" fill="none"/>
<clipPath id="h10"><path d="M900 298.8H905.4V313H900ZM900 331.7H905.4V346H900Z"/></clipPath>
<path clip-path="url(#h10)" d="M848 298L897 347M851 298L900 347M854 298L903 347M857 298L906 347M860 298L909 347M863 298L912 347M866 298L915 347M869 298L918 347M872 298L921 347M875 298L924 347M878 298L927 347M881 298L930 347M884 298L933 347M887 298L936 347M890 298L939 347M893 298L942 347M896 298L945 347M899 298L948 347M902 298L951 347M905 298L954 347" stroke="#00ffff" stroke-width="1" fill="none"/>
<clipPath id="h11"><path d="M857.3 139.9Q860 138.5 862.9 139.2L927 161Q923.3 172 922 184.7Q921 190 917 193.4L894.7 185.3Q892 186 889.7 187.2Q882 196 874.8 195.9H864.8Q848 190 848 179.7L847.4 169.7Q850 150 857.3 139.9Z"/></clipPath>
<path clip-path="url(#h11)" d="M783.5 138L842.5 197M796.0 138L855.0 197M808.5 138L867.5 197M821.0 138L880.0 197M833.5 138L892.5 197M846.0 138L905.0 197M858.5 138L917.5 197M871.0 138L930.0 197M883.5 138L942.5 197M896.0 138L955.0 197M908.5 138L967.5 197M921.0 138L980.0 197" stroke="#00ffff" stroke-width="1" fill="none"/>
<circle cx="870.4" cy="173.5" r="10.6" fill="#212830" stroke="#00ff00" stroke-width="1"/>
<clipPath id="h12"><path d="M859.8 173.5A10.6 10.6 0 1 0 881 173.5A10.6 10.6 0 1 0 859.8 173.5Z"/></clipPath>
<path clip-path="url(#h12)" d="M835 185L858 162M838 185L861 162M841 185L864 162M844 185L867 162M847 185L870 162M850 185L873 162M853 185L876 162M856 185L879 162M859 185L882 162M862 185L885 162M865 185L888 162M868 185L891 162M871 185L894 162M874 185L897 162M877 185L900 162M880 185L903 162" stroke="#00ffff" stroke-width="1" fill="none"/>
<clipPath id="h13"><path d="M1011.7 124.3H1026.6V136.7H1024.8V144.2H1018.6V187.7H1011.7Z"/></clipPath>
<path clip-path="url(#h13)" d="M942 188L1006 124M948 188L1012 124M954 188L1018 124M960 188L1024 124M966 188L1030 124M972 188L1036 124M978 188L1042 124M984 188L1048 124M990 188L1054 124M996 188L1060 124M1002 188L1066 124M1008 188L1072 124M1014 188L1078 124M1020 188L1084 124M1026 188L1090 124" stroke="#00ffff" stroke-width="1" fill="none"/>
<clipPath id="h14"><path d="M985 124.3H998.6V136.7H985Z"/></clipPath>
<path clip-path="url(#h14)" d="M969 137L982 124M975 137L988 124M981 137L994 124M987 137L1000 124M993 137L1006 124M999 137L1012 124" stroke="#00ffff" stroke-width="1" fill="none"/>
<clipPath id="h15"><path d="M1018.6 144.2H1026.6V173.4H1018.6Z"/></clipPath>
<path clip-path="url(#h15)" d="M986 144L1016 174M992 144L1022 174M998 144L1028 174M1004 144L1034 174M1010 144L1040 174M1016 144L1046 174M1022 144L1052 174" stroke="#00ffff" stroke-width="1" fill="none"/>
<clipPath id="h16"><path d="M1041.04 204.25L1073.41 216.25L1062.39 247.37L1030.88 233.55Z"/></clipPath>
<path clip-path="url(#h16)" d="M980 203L1025 248M989 203L1034 248M998 203L1043 248M1007 203L1052 248M1016 203L1061 248M1025 203L1070 248M1034 203L1079 248M1043 203L1088 248M1052 203L1097 248M1061 203L1106 248M1070 203L1115 248" stroke="#00ffff" stroke-width="1" fill="none"/>
<clipPath id="h17"><path d="M1024 365.2A23.1 23.1 0 1 0 1024.01 365.2ZM1022 363.2L1030.7 340.4Q1034 338 1036.9 340.4Q1038 346 1040.6 348.4Q1044 352 1047.4 353.3V376L1015 376Z"/></clipPath>
<path clip-path="url(#h17)" d="M922 412L996 338M931 412L1005 338M940 412L1014 338M949 412L1023 338M958 412L1032 338M967 412L1041 338M976 412L1050 338M985 412L1059 338M994 412L1068 338M1003 412L1077 338M1012 412L1086 338M1021 412L1095 338M1030 412L1104 338M1039 412L1113 338M1048 412L1122 338" stroke="#00ffff" stroke-width="1" fill="none"/>
<clipPath id="h18"><path d="M1014.4 388.3A9.9 9.9 0 1 0 1034.2 388.3A9.9 9.9 0 1 0 1014.4 388.3Z"/></clipPath>
<path clip-path="url(#h18)" d="M989 377L1011 399M992 377L1014 399M995 377L1017 399M998 377L1020 399M1001 377L1023 399M1004 377L1026 399M1007 377L1029 399M1010 377L1032 399M1013 377L1035 399M1016 377L1038 399M1019 377L1041 399M1022 377L1044 399M1025 377L1047 399M1028 377L1050 399M1031 377L1053 399M1034 377L1056 399" stroke="#00ffff" stroke-width="1" fill="none"/>
<clipPath id="h19"><path d="M999.4 413.4H1048.2V420.7Q1024 419 999.4 421.5Z"/></clipPath>
<path clip-path="url(#h19)" d="M989 422L998 413M995 422L1004 413M1001 422L1010 413M1007 422L1016 413M1013 422L1022 413M1019 422L1028 413M1025 422L1034 413M1031 422L1040 413M1037 422L1046 413M1043 422L1052 413M1049 422L1058 413" stroke="#00ffff" stroke-width="1" fill="none"/>
<clipPath id="h20"><path d="M999.4 429H1014.1V435H999.4ZM1032.8 429H1048.2V435H1032.8Z"/></clipPath>
<path clip-path="url(#h20)" d="M990.0 429L996.0 435M993.5 429L999.5 435M997.0 429L1003.0 435M1000.5 429L1006.5 435M1004.0 429L1010.0 435M1007.5 429L1013.5 435M1011.0 429L1017.0 435M1014.5 429L1020.5 435M1018.0 429L1024.0 435M1021.5 429L1027.5 435M1025.0 429L1031.0 435M1028.5 429L1034.5 435M1032.0 429L1038.0 435M1035.5 429L1041.5 435M1039.0 429L1045.0 435M1042.5 429L1048.5 435M1046.0 429L1052.0 435" stroke="#00ffff" stroke-width="1" fill="none"/>
<line x1="837.5" y1="144.5" x2="837.5" y2="489.4" stroke="#00ff00" stroke-width="1"/>
<line x1="837.5" y1="144.5" x2="1018.6" y2="144.5" stroke="#00ff00" stroke-width="1"/>
<line x1="837.5" y1="173.5" x2="1036" y2="173.5" stroke="#00ff00" stroke-width="1"/>
<path d="M845.5 219.9V155Q845.5 149.6 851 149.6H890Q895.3 149.6 895.3 155V198" fill="none" stroke="#00ff00" stroke-width="1"/>
<line x1="845.5" y1="198.1" x2="895.3" y2="198.1" stroke="#00ff00" stroke-width="1"/>
<line x1="845.5" y1="215.2" x2="895.8" y2="215.2" stroke="#00ff00" stroke-width="1"/>
<path d="M845.5 208.5Q870 206 895.3 208" fill="none" stroke="#00ffff" stroke-width="1"/>
<line x1="837.5" y1="220" x2="845.5" y2="220" stroke="#00ff00" stroke-width="1"/>
<line x1="837.5" y1="261.6" x2="860.6" y2="261.6" stroke="#00ff00" stroke-width="1"/>
<path d="M860.6 215.2V261.6H870.9Q878.4 262 878.4 269.7V435M880.9 215.2V261.6" fill="none" stroke="#00ff00" stroke-width="1"/>
<path d="M862.2 215.2V247.3M879 215.2V247.3M862.2 248.5V261.6M879 248.5V261.6" fill="none" stroke="#00ffff" stroke-width="1"/>
<line x1="860.6" y1="246.7" x2="880.9" y2="246.7" stroke="#00ff00" stroke-width="1"/>
<line x1="860.6" y1="248.5" x2="880.9" y2="248.5" stroke="#00ff00" stroke-width="1"/>
<path d="M895.8 173.5V290Q896 298.8 900 298.8H905.4V346H900Q895.5 348 895.5 352V435" fill="none" stroke="#00ff00" stroke-width="1"/>
<path d="M900 298.8V313M900 331.7V346" fill="none" stroke="#00ff00" stroke-width="1"/>
<path d="M874.7 439.4H842Q837.5 439.4 837.5 444" fill="none" stroke="#00ff00" stroke-width="1"/>
<path d="M878.6 435Q878.6 439.4 874.7 439.4" fill="none" stroke="#00ff00" stroke-width="1"/>
<path d="M895.5 435Q895.5 439.4 900 439.4H996.6Q999.4 439.4 999.4 435V363.6" fill="none" stroke="#00ff00" stroke-width="1"/>
<path d="M1048.2 284.2V435Q1048.2 439.4 1052.6 439.4H1065Q1069 439.4 1069 444V489.4H837.5" fill="none" stroke="#00ff00" stroke-width="1"/>
<path d="M867 489.4V463Q867 459.1 871 459.1H996Q999.9 459.1 999.9 463V489.4" fill="none" stroke="#00ff00" stroke-width="1"/>
<path d="M867 489Q867 484.4 872 484.4H995Q999.9 484.4 999.9 489" fill="none" stroke="#00ff00" stroke-width="1"/>
<path d="M1014.1 429.5V489.4M1032.8 429.5V489.4M1016.5 429.5V489.4M1030.5 429.5V489.4M1014.1 477.8H1032.8M1014.1 479.3H1032.8" fill="none" stroke="#00ff00" stroke-width="1"/>
<path d="M908.3 435V269.3H934.4L963 297.9V305.4H986.2V297.9L1011.6 284.2H1048.9" fill="none" stroke="#00ff00" stroke-width="1"/>
<line x1="908.3" y1="401.6" x2="998.8" y2="401.6" stroke="#00ff00" stroke-width="1"/>
<line x1="908.3" y1="435" x2="998.8" y2="435" stroke="#00ff00" stroke-width="1"/>
<line x1="999.4" y1="428.8" x2="1048.2" y2="428.8" stroke="#00ff00" stroke-width="1"/>
<line x1="999.4" y1="413.4" x2="1048.2" y2="413.4" stroke="#00ff00" stroke-width="1"/>
<path d="M999.4 421.5Q1024 419 1048.2 420.7" fill="none" stroke="#00ffff" stroke-width="1"/>
<path d="M999.4 368Q999.4 363.6 1004 363.6H1012" fill="none" stroke="#00ff00" stroke-width="1"/>
<rect x="905.8" y="305.4" width="36" height="32.3" fill="none" stroke="#00ff00" stroke-width="1"/>
<line x1="940.6" y1="305.4" x2="940.6" y2="337.7" stroke="#00ff00" stroke-width="1"/>
<path d="M857.3 139.9Q860 138.5 862.9 139.2L927 161Q923.3 172 922 184.7Q921 190 917 193.4L894.7 185.3Q892 186 889.7 187.2Q882 196 874.8 195.9H864.8Q848 190 848 179.7L847.4 169.7Q850 150 857.3 139.9Z" fill="none" stroke="#00ff00" stroke-width="1"/>
<path d="M894.7 185.3L929.5 195.9L931 193.5L1030.9 233.6" fill="none" stroke="#00ff00" stroke-width="1"/>
<path d="M862.9 139.2L1072.5 215.8" fill="none" stroke="#00ff00" stroke-width="1"/>
<path d="M927 161Q923.3 172 922 184.7Q921 190 917 193.4" fill="none" stroke="#00ffff" stroke-width="1"/>
<path d="M862 149.6H891Q895.6 149.6 895.6 154V167.3" fill="none" stroke="#ffff00" stroke-width="1" stroke-dasharray="18 3"/>
<path d="M896 173.2H913.5M917.3 173.2H937.3M942.3 173.2H959.6" fill="none" stroke="#ffff00" stroke-width="1"/>
<path d="M939.5 173.2V187.4H951M954.7 187.4H965.6V173.2" fill="none" stroke="#ffff00" stroke-width="1"/>
<path d="M991.1 187.2H995.8" fill="none" stroke="#ffff00" stroke-width="1"/>
<line x1="1048.6" y1="291" x2="1048.6" y2="345" stroke="#ffff00" stroke-width="1" stroke-dasharray="18 5"/>
<rect x="930.5" y="124.5" width="44" height="12" fill="none" stroke="#00ff00" stroke-width="1"/>
<rect x="932.5" y="136.5" width="40" height="8" fill="none" stroke="#00ff00" stroke-width="1"/>
<rect x="983.1" y="124.3" width="43.5" height="12.4" fill="none" stroke="#00ff00" stroke-width="1"/>
<path d="M985 136.7V144.2M1024.8 136.7V144.2" fill="none" stroke="#00ff00" stroke-width="1"/>
<rect x="1018.6" y="144.2" width="17.4" height="29.2" fill="none" stroke="#00ff00" stroke-width="1"/>
<line x1="1026.6" y1="144.2" x2="1026.6" y2="173.4" stroke="#00ff00" stroke-width="1"/>
<path d="M1011.7 124.3V187.7H991.2V173.4M1018.6 144.2V187.7" fill="none" stroke="#00ff00" stroke-width="1"/>
<path d="M985 124.3Q1000 140 1008 162.2Q1006 175 1002.4 187.7" fill="none" stroke="#00ffff" stroke-width="1"/>
<polygon points="1090.81,175.5 1107.97,181.58 1108.82,183.69 1104.91,194.72 1085.11,187.7 1089.02,176.67" fill="none" stroke="#00ff00" stroke-width="1"/>
<polyline points="1092.45,178.95 1088.88,189.04" fill="none" stroke="#00ffff" stroke-width="1"/>
<polyline points="1105.66,183.63 1102.08,193.72" fill="none" stroke="#00ffff" stroke-width="1"/>
<polygon points="1080.77,186.17 1111.8,197.16 1104.35,218.19 1073.32,207.2" fill="none" stroke="#00ff00" stroke-width="1"/>
<polyline points="1085.3,187.77 1077.85,208.8" fill="none" stroke="#00ff00" stroke-width="1"/>
<polyline points="1104.44,194.55 1096.99,215.58" fill="none" stroke="#00ff00" stroke-width="1"/>
<polygon points="1067.01,204.96 1107.46,219.29 1104.95,226.36 1064.5,212.03" fill="none" stroke="#00ff00" stroke-width="1"/>
<polyline points="1094.45,222.75 1115.67,230.26 1103.51,261.61 1083.3,254.24" fill="none" stroke="#00ff00" stroke-width="1"/>
<polygon points="1041.04,204.25 1073.41,216.25 1062.39,247.37 1030.88,233.55" fill="none" stroke="#00ff00" stroke-width="1"/>
<polyline points="1075.34,215.87 1022.97,363.73" fill="none" stroke="#00ff00" stroke-width="1"/>
<polyline points="1094.49,222.65 1048.09,353.64" fill="none" stroke="#00ff00" stroke-width="1"/>
<polyline points="1078.76,217.61 1071.08,239.3" fill="none" stroke="#00ffff" stroke-width="1"/>
<polyline points="1091.96,222.29 1084.28,243.98" fill="none" stroke="#00ffff" stroke-width="1"/>
<polyline points="1067.5,238.03 1086.64,244.81" fill="none" stroke="#00ff00" stroke-width="1"/>
<circle cx="1024.3" cy="388.3" r="23.1" fill="none" stroke="#00ff00" stroke-width="1"/>
<path d="M1022 363.2L1030.7 340.4Q1034 338 1036.9 340.4Q1038 346 1040.6 348.4Q1044 352 1047.4 353.3" fill="none" stroke="#00ff00" stroke-width="1"/>
<path d="M1047.4 362Q1040 366 1041.9 369.4Q1044 374 1047.4 376" fill="none" stroke="#00ff00" stroke-width="1"/>
<circle cx="1024.3" cy="388.3" r="9.9" fill="none" stroke="#00ff00" stroke-width="1"/>
<line x1="811" y1="173.5" x2="895" y2="173.5" stroke="#ff0000" stroke-width="1" stroke-dasharray="40 3.8 1.2 3.8"/>
<line x1="870.4" y1="136.8" x2="870.4" y2="275" stroke="#ff0000" stroke-width="1" stroke-dasharray="40 3.8 1.2 3.8"/>
<line x1="952.5" y1="124" x2="952.5" y2="202.7" stroke="#ff0000" stroke-width="1" stroke-dasharray="40 3.8 1.2 3.8"/>
<line x1="978.4" y1="114" x2="978.4" y2="385" stroke="#ff0000" stroke-width="1" stroke-dasharray="40 3.8 1.2 3.8"/>
<line x1="1005.5" y1="97" x2="1005.5" y2="202" stroke="#ff0000" stroke-width="1" stroke-dasharray="40 3.8 1.2 3.8"/>
<line x1="910" y1="256.3" x2="1075" y2="256.3" stroke="#ff0000" stroke-width="1" stroke-dasharray="40 3.8 1.2 3.8"/>
<line x1="883.5" y1="322.5" x2="1041.6" y2="322.5" stroke="#ff0000" stroke-width="1" stroke-dasharray="40 3.8 1.2 3.8"/>
<line x1="1024" y1="349.3" x2="1024" y2="498.7" stroke="#ff0000" stroke-width="1" stroke-dasharray="40 3.8 1.2 3.8"/>
<line x1="993.3" y1="388.4" x2="1057" y2="388.4" stroke="#ff0000" stroke-width="1" stroke-dasharray="40 3.8 1.2 3.8"/>
<polyline points="1104.4,166.2 1024.07,388.21" fill="none" stroke="#ff0000" stroke-width="1" stroke-dasharray="40 3.8 1.2 3.8"/>
<circle cx="978.4" cy="256.2" r="33" fill="none" stroke="#ffffff" stroke-width="1" stroke-dasharray="22 4 1 4 1 4"/>
<circle cx="978.4" cy="256.2" r="40.5" fill="none" stroke="#ffffff" stroke-width="1" stroke-dasharray="22 4 1 4 1 4"/>
<circle cx="978.4" cy="256.2" r="50.5" fill="none" stroke="#ffffff" stroke-width="1" stroke-dasharray="22 4 1 4 1 4"/>
<path d="M930.4 233.5L940.6 203.3H1015.6L1026.7 233.5L1031.5 293.7Q1025 353 978.5 365Q932 353 925.7 293.7Z" fill="none" stroke="#ffffff" stroke-width="1" stroke-dasharray="30 3 1.2 3 1.2 3"/>
<circle cx="978.4" cy="322.5" r="37.4" fill="none" stroke="#ffffff" stroke-width="1" stroke-dasharray="22 4 1 4 1 4"/>
<line x1="952.3" y1="80" x2="952.3" y2="124.3" stroke="#00ffff" stroke-width="1"/>
<line x1="1005.4" y1="80" x2="1005.4" y2="97" stroke="#00ffff" stroke-width="1"/>
<line x1="952.3" y1="82.5" x2="1005.4" y2="82.5" stroke="#00ffff" stroke-width="1"/>
<polygon points="952.3,82.5 956.3,81.1 956.3,83.9" fill="#00ffff" stroke="#00ffff" stroke-width="0.5"/>
<polygon points="1005.4,82.5 1001.4,81.1 1001.4,83.9" fill="#00ffff" stroke="#00ffff" stroke-width="0.5"/>
<rect x="966.1" y="70.1" width="16.7" height="11.4" fill="none" stroke="#00ffff" stroke-width="1"/>
<text x="974.5" y="79.5" fill="#00ffff" font-size="8.5" font-family="Liberation Sans" text-anchor="middle" font-weight="normal" textLength="9.5" lengthAdjust="spacingAndGlyphs">32</text>
<line x1="952.3" y1="97.3" x2="978.4" y2="97.3" stroke="#00ffff" stroke-width="1"/>
<polygon points="952.3,97.3 956.3,95.89999999999999 956.3,98.7" fill="#00ffff" stroke="#00ffff" stroke-width="0.5"/>
<polygon points="978.4,97.3 974.4,95.89999999999999 974.4,98.7" fill="#00ffff" stroke="#00ffff" stroke-width="0.5"/>
<line x1="978.4" y1="95" x2="978.4" y2="112.7" stroke="#00ffff" stroke-width="1"/>
<rect x="956.3" y="87.2" width="15.3" height="8.8" fill="none" stroke="#00ffff" stroke-width="1"/>
<text x="964" y="95.5" fill="#00ffff" font-size="8.5" font-family="Liberation Sans" text-anchor="middle" font-weight="normal" textLength="9" lengthAdjust="spacingAndGlyphs">16</text>
<line x1="987" y1="96.5" x2="1048.4" y2="96.5" stroke="#00ffff" stroke-width="1"/>
<line x1="998.4" y1="94.3" x2="998.4" y2="124.3" stroke="#00ffff" stroke-width="1"/>
<line x1="1011.6" y1="94.3" x2="1011.6" y2="124.3" stroke="#00ffff" stroke-width="1"/>
<rect x="1048.5" y="96.5" width="81.2" height="14" fill="none" stroke="#00ffff" stroke-width="1"/>
<line x1="1065" y1="96.5" x2="1065" y2="110.5" stroke="#00ffff" stroke-width="1"/>
<line x1="1097" y1="96.5" x2="1097" y2="110.5" stroke="#00ffff" stroke-width="1"/>
<line x1="1108" y1="96.5" x2="1108" y2="110.5" stroke="#00ffff" stroke-width="1"/>
<line x1="1118.3" y1="96.5" x2="1118.3" y2="110.5" stroke="#00ffff" stroke-width="1"/>
<circle cx="1056.7" cy="103.5" r="3.6" fill="none" stroke="#00ffff" stroke-width="1"/>
<line x1="1051" y1="103.5" x2="1062.5" y2="103.5" stroke="#00ffff" stroke-width="1"/>
<line x1="1056.7" y1="98" x2="1056.7" y2="109" stroke="#00ffff" stroke-width="1"/>
<circle cx="1071" cy="103.5" r="3.6" fill="none" stroke="#00ffff" stroke-width="1"/>
<line x1="1067.5" y1="109" x2="1075" y2="98.5" stroke="#00ffff" stroke-width="1"/>
<text x="1075.5" y="107.5" fill="#00ffff" font-size="8.5" font-family="Liberation Sans" text-anchor="start" font-weight="normal" textLength="20" lengthAdjust="spacingAndGlyphs">0.02</text>
<text x="1102.5" y="107.5" fill="#00ffff" font-size="8" font-family="Liberation Serif" text-anchor="middle" font-weight="normal" textLength="5" lengthAdjust="spacingAndGlyphs">A</text>
<text x="1113.2" y="107.5" fill="#00ffff" font-size="8" font-family="Liberation Serif" text-anchor="middle" font-weight="normal" textLength="5" lengthAdjust="spacingAndGlyphs">B</text>
<text x="1123.5" y="107.5" fill="#00ffff" font-size="8" font-family="Liberation Serif" text-anchor="middle" font-weight="normal" textLength="5" lengthAdjust="spacingAndGlyphs">F</text>
<path d="M1021.20 75.00V83.00M1020.00 77.40H1022.40M1020.00 80.20H1022.40M1023.20 76.60H1028.00M1023.20 79.40H1028.00M1023.20 82.20H1028.00M1025.60 75.00V83.00M1023.20 83.00L1025.60 79.80" fill="none" stroke="#00ffff" stroke-width="0.9"/>
<path d="M1029.00 76.20H1037.00M1029.80 79.00H1036.20M1029.00 82.20H1037.00M1033.00 75.00V83.00M1030.60 79.80L1029.40 81.80" fill="none" stroke="#00ffff" stroke-width="0.9"/>
<path d="M1021.20 87.30V95.30M1020.00 89.70H1022.40M1020.00 92.50H1022.40M1023.20 87.70V94.90M1028.00 87.70V94.90M1023.20 87.70H1028.00M1023.20 91.30H1028.00M1023.20 94.90H1028.00" fill="none" stroke="#00ffff" stroke-width="0.9"/>
<path d="M1029.00 88.50H1037.00M1029.80 91.30H1036.20M1029.00 94.50H1037.00M1033.00 87.30V95.30M1030.60 92.10L1029.40 94.10" fill="none" stroke="#00ffff" stroke-width="0.9"/>
<text x="1052" y="83" fill="#00ffff" font-size="10" font-family="Liberation Sans" text-anchor="middle" font-weight="normal">ø</text>
<text x="1052" y="95" fill="#00ffff" font-size="10" font-family="Liberation Sans" text-anchor="middle" font-weight="normal">ø</text>
<text x="1066" y="82.5" fill="#2a8c90" font-size="8.5" font-family="Liberation Sans" text-anchor="start" font-weight="normal" textLength="24" lengthAdjust="spacingAndGlyphs">7.8  F</text>
<rect x="1090" y="73" width="14.3" height="10" fill="#00ffff"/>
<text x="1126" y="82.5" fill="#2a8c90" font-size="8.5" font-family="Liberation Sans" text-anchor="start" font-weight="normal" textLength="3" lengthAdjust="spacingAndGlyphs">)</text>
<text x="1065.2" y="95" fill="#2a8c90" font-size="8.5" font-family="Liberation Sans" text-anchor="start" font-weight="normal" textLength="15" lengthAdjust="spacingAndGlyphs">8  (</text>
<rect x="1081" y="84" width="14" height="4.8" fill="#00ffff"/><rect x="1081" y="90" width="14" height="5" fill="#00ffff"/>
<text x="1116.7" y="95" fill="#2a8c90" font-size="8.5" font-family="Liberation Sans" text-anchor="start" font-weight="normal" textLength="3" lengthAdjust="spacingAndGlyphs">)</text>
<circle cx="967.2" cy="241.9" r="5" fill="none" stroke="#00ffff" stroke-width="1"/>
<line x1="972.2" y1="241.9" x2="976.6" y2="241.9" stroke="#00ffff" stroke-width="1"/>
<line x1="976.6" y1="238" x2="976.6" y2="246" stroke="#00ffff" stroke-width="1"/>
<text x="967.2" y="244.8" fill="#00ffff" font-size="7" font-family="Liberation Sans" text-anchor="middle" font-weight="normal" textLength="4" lengthAdjust="spacingAndGlyphs">F</text>
<path d="M943.6 279.6Q958 268 978.4 265.6" fill="none" stroke="#00ffff" stroke-width="1"/>
<polygon points="978.4,265.6 982.4,264.20000000000005 982.4,267.0" fill="#00ffff" stroke="#00ffff" stroke-width="0.5"/>
<path d="M978.4 270.5Q998 272 1008.3 286.4" fill="none" stroke="#00ffff" stroke-width="1"/>
<text x="958" y="270" fill="#00ffff" font-size="8.5" font-family="Liberation Sans" text-anchor="middle" font-weight="normal" textLength="13" lengthAdjust="spacingAndGlyphs" transform="rotate(-22 958 270)">45°</text>
<text x="997" y="276" fill="#00ffff" font-size="8.5" font-family="Liberation Sans" text-anchor="middle" font-weight="normal" textLength="15" lengthAdjust="spacingAndGlyphs" transform="rotate(24 997 276)">60°</text>
<line x1="1006.5" y1="297.7" x2="949.4" y2="344.9" stroke="#00ffff" stroke-width="1"/>
<polygon points="949.4,344.9 953.375015819786,343.43056159283515 951.5910641397298,341.2724336070046" fill="#00ffff" stroke="#00ffff" stroke-width="0.5"/>
<polygon points="1006.5,297.7 1002.524984180214,299.1694384071648 1004.3089358602701,301.3275663929954" fill="#00ffff" stroke="#00ffff" stroke-width="0.5"/>
<text x="965" y="316" fill="#00ffff" font-size="8.5" font-family="Liberation Sans" text-anchor="middle" font-weight="normal" textLength="24" lengthAdjust="spacingAndGlyphs" transform="rotate(-40 965 316)">ø45.2</text>
<line x1="890" y1="380.5" x2="978.3" y2="380.5" stroke="#00ffff" stroke-width="1"/>
<polygon points="978.3,380.5 974.3,379.1 974.3,381.9" fill="#00ffff" stroke="#00ffff" stroke-width="0.5"/>
<line x1="941.7" y1="330" x2="941.7" y2="383" stroke="#00ffff" stroke-width="1"/>
<line x1="978.3" y1="323" x2="978.3" y2="382" stroke="#00ffff" stroke-width="1"/>
<text x="890" y="379.5" fill="#00ffff" font-size="7.5" font-family="Liberation Sans" text-anchor="start" font-weight="normal" textLength="50" lengthAdjust="spacingAndGlyphs">22.6±0.015</text>
<line x1="826" y1="314.2" x2="905.4" y2="314.2" stroke="#00ffff" stroke-width="1"/>
<line x1="826" y1="330.2" x2="905.4" y2="330.2" stroke="#00ffff" stroke-width="1"/>
<line x1="828.4" y1="314.4" x2="828.4" y2="367" stroke="#00ffff" stroke-width="1"/>
<polygon points="828.4,314.4 827.4,317.4 829.4,317.4" fill="#00ffff" stroke="#00ffff" stroke-width="0.5"/>
<polygon points="828.4,330.2 827.4,327.2 829.4,327.2" fill="#00ffff" stroke="#00ffff" stroke-width="0.5"/>
<text x="822.3" y="358.3" fill="#00ffff" font-size="9.5" font-family="Liberation Sans" text-anchor="middle" font-weight="normal" textLength="17" lengthAdjust="spacingAndGlyphs" transform="rotate(-90 822.3 358.3)">ø10</text>
<line x1="819.4" y1="337" x2="819.4" y2="346.8" stroke="#00ffff" stroke-width="1"/>
<text x="815.8" y="341.9" fill="#00ffff" font-size="7" font-family="Liberation Sans" text-anchor="middle" font-weight="normal" textLength="8" lengthAdjust="spacingAndGlyphs" transform="rotate(-90 815.8 341.9)">H7</text>
<text x="827" y="342" fill="#00ffff" font-size="7" font-family="Liberation Sans" text-anchor="middle" font-weight="normal" textLength="8" lengthAdjust="spacingAndGlyphs" transform="rotate(-90 827 342)">f6</text>
<line x1="686" y1="66.5" x2="711" y2="66.5" stroke="#00ffff" stroke-width="1"/>
<line x1="711" y1="66.5" x2="840.5" y2="156.4" stroke="#00ffff" stroke-width="1"/>
<text x="697.5" y="65.7" fill="#00ffff" font-size="8.5" font-family="Liberation Serif" text-anchor="middle" font-weight="normal" textLength="4.5" lengthAdjust="spacingAndGlyphs">7</text>
<circle cx="840.5" cy="156.4" r="1" fill="#00ffff" stroke="#00ffff" stroke-width="1"/>
<line x1="830" y1="66.5" x2="855" y2="66.5" stroke="#00ffff" stroke-width="1"/>
<line x1="855" y1="66.5" x2="954.8" y2="136.1" stroke="#00ffff" stroke-width="1"/>
<text x="842" y="65.7" fill="#00ffff" font-size="8.5" font-family="Liberation Serif" text-anchor="middle" font-weight="normal" textLength="4.5" lengthAdjust="spacingAndGlyphs">8</text>
<circle cx="954.8" cy="136.1" r="1" fill="#00ffff" stroke="#00ffff" stroke-width="1"/>
<line x1="686" y1="195.5" x2="711" y2="195.5" stroke="#00ffff" stroke-width="1"/>
<line x1="711" y1="195.5" x2="903.3" y2="305.8" stroke="#00ffff" stroke-width="1"/>
<text x="697.5" y="194.7" fill="#00ffff" font-size="8.5" font-family="Liberation Serif" text-anchor="middle" font-weight="normal" textLength="4.5" lengthAdjust="spacingAndGlyphs">6</text>
<circle cx="903.3" cy="305.8" r="1" fill="#00ffff" stroke="#00ffff" stroke-width="1"/>
<line x1="686" y1="260.5" x2="711" y2="260.5" stroke="#00ffff" stroke-width="1"/>
<line x1="711" y1="260.5" x2="883" y2="323" stroke="#00ffff" stroke-width="1"/>
<text x="697.5" y="259.7" fill="#00ffff" font-size="8.5" font-family="Liberation Serif" text-anchor="middle" font-weight="normal" textLength="4.5" lengthAdjust="spacingAndGlyphs">5</text>
<circle cx="883" cy="323" r="1" fill="#00ffff" stroke="#00ffff" stroke-width="1"/>
<line x1="1255.7" y1="54.5" x2="1281" y2="54.5" stroke="#00ffff" stroke-width="1"/>
<line x1="1255.7" y1="54.5" x2="1024.8" y2="162.2" stroke="#00ffff" stroke-width="1"/>
<circle cx="1024.8" cy="162.2" r="1" fill="#00ffff" stroke="#00ffff" stroke-width="1"/>
<text x="1268.5" y="53.7" fill="#00ffff" font-size="8.5" font-family="Liberation Serif" text-anchor="middle" font-weight="normal" textLength="4.5" lengthAdjust="spacingAndGlyphs">9</text>
<line x1="1255.7" y1="90.5" x2="1281" y2="90.5" stroke="#00ffff" stroke-width="1"/>
<line x1="1255.7" y1="90.5" x2="1015.4" y2="203.3" stroke="#00ffff" stroke-width="1"/>
<circle cx="1015.4" cy="203.3" r="1" fill="#00ffff" stroke="#00ffff" stroke-width="1"/>
<text x="1268.5" y="89.7" fill="#00ffff" font-size="8.5" font-family="Liberation Serif" text-anchor="middle" font-weight="normal" textLength="9.0" lengthAdjust="spacingAndGlyphs">10</text>
<line x1="1255.7" y1="126.5" x2="1281" y2="126.5" stroke="#00ffff" stroke-width="1"/>
<line x1="1255.7" y1="126.5" x2="1090.7" y2="203.9" stroke="#00ffff" stroke-width="1"/>
<circle cx="1090.7" cy="203.9" r="1" fill="#00ffff" stroke="#00ffff" stroke-width="1"/>
<text x="1268.5" y="125.7" fill="#00ffff" font-size="8.5" font-family="Liberation Serif" text-anchor="middle" font-weight="normal" textLength="9.0" lengthAdjust="spacingAndGlyphs">11</text>
<line x1="1255.7" y1="217.5" x2="1281" y2="217.5" stroke="#00ffff" stroke-width="1"/>
<line x1="1255.7" y1="217.5" x2="1056.9" y2="310.5" stroke="#00ffff" stroke-width="1"/>
<circle cx="1056.9" cy="310.5" r="1" fill="#00ffff" stroke="#00ffff" stroke-width="1"/>
<text x="1268.5" y="216.7" fill="#00ffff" font-size="8.5" font-family="Liberation Serif" text-anchor="middle" font-weight="normal" textLength="9.0" lengthAdjust="spacingAndGlyphs">12</text>
<line x1="1255.7" y1="272.5" x2="1281" y2="272.5" stroke="#00ffff" stroke-width="1"/>
<line x1="1255.7" y1="272.5" x2="1044.9" y2="370.6" stroke="#00ffff" stroke-width="1"/>
<circle cx="1044.9" cy="370.6" r="1" fill="#00ffff" stroke="#00ffff" stroke-width="1"/>
<text x="1268.5" y="271.7" fill="#00ffff" font-size="8.5" font-family="Liberation Serif" text-anchor="middle" font-weight="normal" textLength="9.0" lengthAdjust="spacingAndGlyphs">13</text>
<line x1="1255.7" y1="304.5" x2="1281" y2="304.5" stroke="#00ffff" stroke-width="1"/>
<line x1="1255.7" y1="304.5" x2="1019.6" y2="391.6" stroke="#00ffff" stroke-width="1"/>
<circle cx="1019.6" cy="391.6" r="1" fill="#00ffff" stroke="#00ffff" stroke-width="1"/>
<text x="1268.5" y="303.7" fill="#00ffff" font-size="8.5" font-family="Liberation Serif" text-anchor="middle" font-weight="normal" textLength="9.0" lengthAdjust="spacingAndGlyphs">14</text>
<path d="M282.90 616.85H290.10M286.50 616.00V619.83M283.70 619.83H289.30M282.50 622.38H290.50M284.90 620.67V624.50M288.10 620.67V624.50" fill="none" stroke="#00ffff" stroke-width="0.9"/>
<path d="M291.20 617.27H299.20M292.00 620.25H298.40M291.20 623.65H299.20M295.20 616.00V624.50M292.80 621.10L291.60 623.23" fill="none" stroke="#00ffff" stroke-width="0.9"/>
<path d="M302.30 616.85H309.50M305.90 616.00V619.83M303.10 619.83H308.70M301.90 622.38H309.90M304.30 620.67V624.50M307.50 620.67V624.50" fill="none" stroke="#00ffff" stroke-width="0.9"/>
<path d="M311.52 616.00L309.60 619.83M310.68 618.98V624.50M310.00 620.67H312.00M312.80 616.85H317.60M312.80 616.85V620.67M317.60 616.85V620.67M312.80 620.67H317.60M312.80 624.08H317.60M315.20 620.67V624.50" fill="none" stroke="#00ffff" stroke-width="0.9"/>
<polyline points="321.9,622.5 323.9,624.5" fill="none" stroke="#00ffff" stroke-width="1"/>
<path d="M332.66 616.00L330.10 619.83M331.54 618.98V624.50M330.50 620.67H333.30M334.10 617.70H338.10M334.10 620.67H338.10M334.10 623.65H338.10M336.10 616.00V624.50M334.10 624.50L336.10 621.10" fill="none" stroke="#00ffff" stroke-width="0.9"/>
<path d="M338.80 617.27H346.80M339.60 620.25H346.00M338.80 623.65H346.80M342.80 616.00V624.50M340.40 621.10L339.20 623.23" fill="none" stroke="#00ffff" stroke-width="0.9"/>
<path d="M348.10 617.27H356.10M348.90 620.25H355.30M348.10 623.65H356.10M352.10 616.00V624.50M349.70 621.10L348.50 623.23" fill="none" stroke="#00ffff" stroke-width="0.9"/>
<path d="M358.80 617.27H362.00M360.40 617.27V623.65M358.80 620.25H362.00M358.80 624.08L362.00 622.80M362.80 617.70H366.80M362.80 620.67H366.80M362.80 623.65H366.80M364.80 616.00V624.50M362.80 624.50L364.80 621.10" fill="none" stroke="#00ffff" stroke-width="0.9"/>
<path d="M367.00 617.27H369.80M368.40 617.27V623.65M367.00 620.25H369.80M367.00 624.08L369.80 622.80M370.60 618.12H375.00M371.80 616.00V624.50M374.20 616.00V622.80M370.60 621.95H375.00M371.80 619.40L375.00 624.50" fill="none" stroke="#00ffff" stroke-width="0.9"/>
<path d="M375.20 617.27H383.20M376.00 620.25H382.40M375.20 623.65H383.20M379.20 616.00V624.50M376.80 621.10L375.60 623.23" fill="none" stroke="#00ffff" stroke-width="0.9"/>
<polyline points="387.5,622.5 389.5,624.5" fill="none" stroke="#00ffff" stroke-width="1"/>
<path d="M396.10 616.85H403.30M399.70 616.00V619.83M396.90 619.83H402.50M395.70 622.38H403.70M398.10 620.67V624.50M401.30 620.67V624.50" fill="none" stroke="#00ffff" stroke-width="0.9"/>
<path d="M404.90 617.27H407.70M406.30 617.27V623.65M404.90 620.25H407.70M404.90 624.08L407.70 622.80M408.50 616.85H412.90M408.50 616.85V620.67M412.90 616.85V620.67M408.50 620.67H412.90M408.50 624.08H412.90M410.70 620.67V624.50" fill="none" stroke="#00ffff" stroke-width="0.9"/>
<line x1="282" y1="663.4" x2="426" y2="663.4" stroke="#ff0000" stroke-width="1" stroke-dasharray="40 3.8 1.2 3.8"/>
<line x1="216.3" y1="679.3" x2="282.5" y2="679.3" stroke="#ff0000" stroke-width="1" stroke-dasharray="40 3.8 1.2 3.8"/>
<line x1="282.5" y1="687.5" x2="321.5" y2="687.5" stroke="#ff0000" stroke-width="1" stroke-dasharray="40 3.8 1.2 3.8"/>
<line x1="426.2" y1="679.3" x2="505.9" y2="679.3" stroke="#ff0000" stroke-width="1" stroke-dasharray="40 3.8 1.2 3.8"/>
<line x1="396" y1="687.5" x2="426" y2="687.5" stroke="#ff0000" stroke-width="1" stroke-dasharray="40 3.8 1.2 3.8"/>
<line x1="216.3" y1="734.1" x2="249" y2="734.1" stroke="#ff0000" stroke-width="1" stroke-dasharray="40 3.8 1.2 3.8"/>
<line x1="216.3" y1="758.5" x2="249" y2="758.5" stroke="#ff0000" stroke-width="1" stroke-dasharray="40 3.8 1.2 3.8"/>
<line x1="282.5" y1="761.3" x2="426" y2="761.3" stroke="#ff0000" stroke-width="1" stroke-dasharray="40 3.8 1.2 3.8"/>
<line x1="190.2" y1="787.4" x2="618.9" y2="787.4" stroke="#ff0000" stroke-width="1" stroke-dasharray="40 3.8 1.2 3.8"/>
<line x1="282.5" y1="814.2" x2="426" y2="814.2" stroke="#ff0000" stroke-width="1" stroke-dasharray="40 3.8 1.2 3.8"/>
<line x1="216.3" y1="841.3" x2="249" y2="841.3" stroke="#ff0000" stroke-width="1" stroke-dasharray="40 3.8 1.2 3.8"/>
<line x1="216.3" y1="816.4" x2="249" y2="816.4" stroke="#ff0000" stroke-width="1" stroke-dasharray="40 3.8 1.2 3.8"/>
<line x1="326.6" y1="833.2" x2="380.5" y2="833.2" stroke="#ff0000" stroke-width="1" stroke-dasharray="40 3.8 1.2 3.8"/>
<line x1="472" y1="734.5" x2="504.5" y2="734.5" stroke="#ff0000" stroke-width="1" stroke-dasharray="40 3.8 1.2 3.8"/>
<line x1="472.5" y1="758.5" x2="505.9" y2="758.5" stroke="#ff0000" stroke-width="1" stroke-dasharray="40 3.8 1.2 3.8"/>
<line x1="472.5" y1="816.4" x2="505.9" y2="816.4" stroke="#ff0000" stroke-width="1" stroke-dasharray="40 3.8 1.2 3.8"/>
<line x1="472.5" y1="841.3" x2="505.9" y2="841.3" stroke="#ff0000" stroke-width="1" stroke-dasharray="40 3.8 1.2 3.8"/>
<line x1="406.3" y1="841.1" x2="440" y2="841.1" stroke="#ff0000" stroke-width="1" stroke-dasharray="40 3.8 1.2 3.8"/>
<line x1="406.2" y1="734.5" x2="439.7" y2="734.5" stroke="#ff0000" stroke-width="1" stroke-dasharray="40 3.8 1.2 3.8"/>
<line x1="281.8" y1="841.1" x2="316" y2="841.1" stroke="#ff0000" stroke-width="1" stroke-dasharray="40 3.8 1.2 3.8"/>
<line x1="252.5" y1="646.3" x2="252.5" y2="704" stroke="#ff0000" stroke-width="1" stroke-dasharray="40 3.8 1.2 3.8"/>
<line x1="299.3" y1="646.3" x2="299.3" y2="708.3" stroke="#ff0000" stroke-width="1" stroke-dasharray="40 3.8 1.2 3.8"/>
<line x1="354.4" y1="646.3" x2="354.4" y2="870" stroke="#ff0000" stroke-width="1" stroke-dasharray="40 3.8 1.2 3.8"/>
<line x1="409.5" y1="646.3" x2="409.5" y2="707.5" stroke="#ff0000" stroke-width="1" stroke-dasharray="40 3.8 1.2 3.8"/>
<line x1="455.7" y1="646.3" x2="455.7" y2="704" stroke="#ff0000" stroke-width="1" stroke-dasharray="40 3.8 1.2 3.8"/>
<line x1="233.1" y1="717" x2="233.1" y2="857.3" stroke="#ff0000" stroke-width="1" stroke-dasharray="40 3.8 1.2 3.8"/>
<line x1="310.6" y1="717" x2="310.6" y2="857.3" stroke="#ff0000" stroke-width="1" stroke-dasharray="40 3.8 1.2 3.8"/>
<line x1="396.4" y1="709" x2="396.4" y2="857.3" stroke="#ff0000" stroke-width="1" stroke-dasharray="40 3.8 1.2 3.8"/>
<line x1="299.2" y1="814.3" x2="299.2" y2="857.5" stroke="#ff0000" stroke-width="1" stroke-dasharray="40 3.8 1.2 3.8"/>
<line x1="422.5" y1="717" x2="422.5" y2="857.3" stroke="#ff0000" stroke-width="1" stroke-dasharray="40 3.8 1.2 3.8"/>
<line x1="488.6" y1="717" x2="488.6" y2="857.3" stroke="#ff0000" stroke-width="1" stroke-dasharray="40 3.8 1.2 3.8"/>
<path d="M216.3 646.3H505.9Q521.5 646.3 521.5 662V861.6Q521.5 877.3 506 877.3H216.3Q200.3 877.3 200.3 861.3V662.6Q200.3 646.3 216.3 646.3Z" fill="none" stroke="#00ff00" stroke-width="1"/>
<path d="M224.2 646.3V701.5Q224.2 704.1 227 704.1H282.5" fill="none" stroke="#00ff00" stroke-width="1"/>
<circle cx="252.5" cy="679.3" r="24.8" fill="none" stroke="#00ff00" stroke-width="1"/>
<line x1="241.6" y1="657" x2="241.6" y2="701.5" stroke="#00ff00" stroke-width="1"/>
<line x1="264.8" y1="657" x2="264.8" y2="701.5" stroke="#00ff00" stroke-width="1"/>
<line x1="282.5" y1="646.3" x2="282.5" y2="877.3" stroke="#00ff00" stroke-width="1"/>
<line x1="426.2" y1="646.3" x2="426.2" y2="844" stroke="#00ff00" stroke-width="1"/>
<path d="M426.2 704.1H480.7Q483.5 704.1 483.5 701.5V646.3" fill="none" stroke="#00ff00" stroke-width="1"/>
<circle cx="455.7" cy="679.3" r="24.8" fill="none" stroke="#00ff00" stroke-width="1"/>
<line x1="444.7" y1="657" x2="444.7" y2="701.5" stroke="#00ff00" stroke-width="1"/>
<line x1="467.6" y1="657" x2="467.6" y2="701.5" stroke="#00ff00" stroke-width="1"/>
<circle cx="299.3" cy="663.4" r="6.7" fill="none" stroke="#00ff00" stroke-width="1"/>
<circle cx="299.3" cy="687.5" r="13.8" fill="none" stroke="#00ff00" stroke-width="1"/>
<circle cx="299.3" cy="687.5" r="7.2" fill="none" stroke="#00ff00" stroke-width="1"/>
<polygon points="306.9,687.5 303.1,694.08 295.5,694.08 291.7,687.5 295.5,680.92 303.1,680.92" fill="none" stroke="#00ff00" stroke-width="1.5"/>
<circle cx="409.5" cy="663.4" r="6.7" fill="none" stroke="#00ff00" stroke-width="1"/>
<circle cx="409.5" cy="687.5" r="13.8" fill="none" stroke="#00ff00" stroke-width="1"/>
<circle cx="409.5" cy="687.5" r="7.2" fill="none" stroke="#00ff00" stroke-width="1"/>
<polygon points="417.1,687.5 413.3,694.08 405.7,694.08 401.9,687.5 405.7,680.92 413.3,680.92" fill="none" stroke="#00ff00" stroke-width="1.5"/>
<circle cx="354.4" cy="663.4" r="13.8" fill="none" stroke="#00ff00" stroke-width="1"/>
<circle cx="354.4" cy="663.4" r="7.2" fill="none" stroke="#00ff00" stroke-width="1"/>
<polygon points="362.0,663.4 358.2,669.98 350.6,669.98 346.8,663.4 350.6,656.82 358.2,656.82" fill="none" stroke="#00ff00" stroke-width="1.5"/>
<path d="M216.3 857.3V717.2H282.5M249.1 717.2V857.3M216.3 857.3H315.6V844.2" fill="none" stroke="#00ff00" stroke-width="1"/>
<line x1="249.1" y1="742" x2="282.5" y2="742" stroke="#00ff00" stroke-width="1"/>
<line x1="249.1" y1="772.3" x2="282.5" y2="772.3" stroke="#00ff00" stroke-width="1"/>
<line x1="249.1" y1="796.2" x2="282.5" y2="796.2" stroke="#00ff00" stroke-width="1"/>
<line x1="249.1" y1="820.3" x2="282.5" y2="820.3" stroke="#00ff00" stroke-width="1"/>
<circle cx="233.1" cy="734.1" r="6.7" fill="none" stroke="#00ff00" stroke-width="1"/>
<circle cx="233.1" cy="758.5" r="13.8" fill="none" stroke="#00ff00" stroke-width="1"/>
<circle cx="233.1" cy="758.5" r="7.2" fill="none" stroke="#00ff00" stroke-width="1"/>
<polygon points="240.7,758.5 236.9,765.08 229.3,765.08 225.5,758.5 229.3,751.92 236.9,751.92" fill="none" stroke="#00ff00" stroke-width="1.5"/>
<circle cx="233.1" cy="816.4" r="13.8" fill="none" stroke="#00ff00" stroke-width="1"/>
<circle cx="233.1" cy="816.4" r="7.2" fill="none" stroke="#00ff00" stroke-width="1"/>
<polygon points="240.7,816.4 236.9,822.98 229.3,822.98 225.5,816.4 229.3,809.82 236.9,809.82" fill="none" stroke="#00ff00" stroke-width="1.5"/>
<circle cx="233.1" cy="841.3" r="6.7" fill="none" stroke="#00ff00" stroke-width="1"/>
<path d="M426.2 717.2H505.6V857.4H406V844H426.2M439.4 717.2V857.4M472.8 717.2V857.4" fill="none" stroke="#00ff00" stroke-width="1"/>
<line x1="439.4" y1="742" x2="472.8" y2="742" stroke="#00ff00" stroke-width="1"/>
<line x1="439.4" y1="772.3" x2="472.8" y2="772.3" stroke="#00ff00" stroke-width="1"/>
<line x1="439.4" y1="796.3" x2="472.8" y2="796.3" stroke="#00ff00" stroke-width="1"/>
<line x1="439.4" y1="820.5" x2="472.8" y2="820.5" stroke="#00ff00" stroke-width="1"/>
<circle cx="488.6" cy="734.1" r="6.7" fill="none" stroke="#00ff00" stroke-width="1"/>
<circle cx="488.6" cy="758.5" r="13.8" fill="none" stroke="#00ff00" stroke-width="1"/>
<circle cx="488.6" cy="758.5" r="7.2" fill="none" stroke="#00ff00" stroke-width="1"/>
<polygon points="496.2,758.5 492.4,765.08 484.8,765.08 481.0,758.5 484.8,751.92 492.4,751.92" fill="none" stroke="#00ff00" stroke-width="1.5"/>
<circle cx="488.6" cy="816.4" r="13.8" fill="none" stroke="#00ff00" stroke-width="1"/>
<circle cx="488.6" cy="816.4" r="7.2" fill="none" stroke="#00ff00" stroke-width="1"/>
<polygon points="496.2,816.4 492.4,822.98 484.8,822.98 481.0,816.4 484.8,809.82 492.4,809.82" fill="none" stroke="#00ff00" stroke-width="1.5"/>
<circle cx="488.6" cy="841" r="6.7" fill="none" stroke="#00ff00" stroke-width="1"/>
<circle cx="422.6" cy="841" r="13.8" fill="none" stroke="#00ff00" stroke-width="1"/>
<circle cx="422.6" cy="841" r="7.2" fill="none" stroke="#00ff00" stroke-width="1"/>
<polygon points="430.2,841.0 426.4,847.58 418.8,847.58 415.0,841.0 418.8,834.42 426.4,834.42" fill="none" stroke="#00ff00" stroke-width="1.5"/>
<line x1="282.5" y1="844.2" x2="426.2" y2="844.2" stroke="#00ff00" stroke-width="1"/>
<circle cx="310.6" cy="761.3" r="21.9" fill="none" stroke="#00ff00" stroke-width="1"/>
<circle cx="310.6" cy="761.3" r="6.7" fill="none" stroke="#00ff00" stroke-width="1"/>
<circle cx="396.4" cy="761.3" r="21.9" fill="none" stroke="#00ff00" stroke-width="1"/>
<circle cx="396.4" cy="761.3" r="6.7" fill="none" stroke="#00ff00" stroke-width="1"/>
<circle cx="310.6" cy="813.9" r="21.9" fill="none" stroke="#00ff00" stroke-width="1"/>
<circle cx="310.6" cy="813.9" r="6.7" fill="none" stroke="#00ff00" stroke-width="1"/>
<circle cx="396.4" cy="813.7" r="21.9" fill="none" stroke="#00ff00" stroke-width="1"/>
<circle cx="396.4" cy="813.7" r="6.7" fill="none" stroke="#00ff00" stroke-width="1"/>
<path d="M426.2 724.7A9.8 9.8 0 0 1 426.2 744.3" fill="none" stroke="#00ff00" stroke-width="1"/>
<path d="M426.2 729.7Q430.5 734.5 426.2 739.3" fill="none" stroke="#00ff00" stroke-width="1.3"/>
<path d="M426.2 777.5A9.8 9.8 0 0 1 426.2 797.0999999999999" fill="none" stroke="#00ff00" stroke-width="1"/>
<path d="M426.2 782.5Q430.5 787.3 426.2 792.0999999999999" fill="none" stroke="#00ff00" stroke-width="1.3"/>
<circle cx="299.2" cy="841.1" r="12.4" fill="none" stroke="#00ff00" stroke-width="1"/>
<circle cx="299.2" cy="841.1" r="6.5" fill="none" stroke="#00ff00" stroke-width="1"/>
<polygon points="306.0,841.1 302.6,846.99 295.8,846.99 292.4,841.1 295.8,835.21 302.6,835.21" fill="none" stroke="#00ff00" stroke-width="1.5"/>
<path d="M332.3 844.2A25.3 25.3 0 0 0 376.9 844.2" fill="none" stroke="#00ff00" stroke-width="1"/>
<line x1="342.2" y1="844.2" x2="342.2" y2="855" stroke="#00ff00" stroke-width="1"/>
<line x1="365.2" y1="844.2" x2="365.2" y2="855" stroke="#00ff00" stroke-width="1"/>
<path d="M229.8 760V756Q229.8 754.6 232 754.6H245.8" fill="none" stroke="#ffffff" stroke-width="1"/>
<line x1="229.8" y1="754.6" x2="229.8" y2="822" stroke="#ffffff" stroke-width="1" stroke-dasharray="18 3 1.2 3 1.2 3"/>
<line x1="245.8" y1="754.6" x2="245.8" y2="822" stroke="#ffffff" stroke-width="1" stroke-dasharray="18 3 1.2 3 1.2 3"/>
<path d="M229.8 820Q230 823 233 823H250.8" fill="none" stroke="#ffffff" stroke-width="1"/>
<line x1="250.8" y1="746.2" x2="250.8" y2="829" stroke="#ffffff" stroke-width="1" stroke-dasharray="30 3 1.2 3 1.2 3"/>
<line x1="252.5" y1="750" x2="252.5" y2="825" stroke="#ffffff" stroke-width="1" stroke-dasharray="30 3 1.2 3 1.2 3"/>
<path d="M250.8 749Q251 746.2 254 746.2H282.5M250.8 826Q251 829 254 829H282.5" fill="none" stroke="#ffffff" stroke-width="1"/>
<path d="M282.5 740Q286 736.9 290 736.9H327.4" fill="none" stroke="#ffffff" stroke-width="1" stroke-dasharray="22 3 1.2 3 1.2 3"/>
<path d="M282.5 835Q286 838.3 290 838.3H328.3" fill="none" stroke="#ffffff" stroke-width="1" stroke-dasharray="22 3 1.2 3 1.2 3"/>
<line x1="290.4" y1="736.9" x2="290.4" y2="838.3" stroke="#ffffff" stroke-width="1" stroke-dasharray="30 3 1.2 3 1.2 3"/>
<line x1="327.4" y1="736.9" x2="327.4" y2="838.3" stroke="#ffffff" stroke-width="1" stroke-dasharray="30 3 1.2 3 1.2 3"/>
<line x1="329.1" y1="736.9" x2="329.1" y2="838.3" stroke="#ffffff" stroke-width="1" stroke-dasharray="30 3 1.2 3 1.2 3"/>
<path d="M329.1 747Q331 750.4 334 750.4H376.2Q379.6 750 379.6 737.8" fill="none" stroke="#ffffff" stroke-width="1" stroke-dasharray="40 3 1.2 3 1.2 3"/>
<path d="M329.1 828Q331 824 334 824H376.2Q379.6 825 379.6 837.9" fill="none" stroke="#ffffff" stroke-width="1" stroke-dasharray="40 3 1.2 3 1.2 3"/>
<line x1="379.6" y1="737.8" x2="379.6" y2="837.9" stroke="#ffffff" stroke-width="1" stroke-dasharray="30 3 1.2 3 1.2 3"/>
<line x1="414.1" y1="737.8" x2="414.1" y2="837.9" stroke="#ffffff" stroke-width="1" stroke-dasharray="30 3 1.2 3 1.2 3"/>
<path d="M379.6 737.8H414.1Q420 739 426.2 739" fill="none" stroke="#ffffff" stroke-width="1" stroke-dasharray="22 3 1.2 3 1.2 3"/>
<line x1="379.6" y1="838" x2="426.2" y2="838" stroke="#ffffff" stroke-width="1" stroke-dasharray="22 3 1.2 3 1.2 3"/>
<path d="M426.7 746.2H477.2V750.4H502.5" fill="none" stroke="#ffffff" stroke-width="1" stroke-dasharray="30 3 1.2 3 1.2 3"/>
<path d="M428 829.3H477.3V824.6H502.5" fill="none" stroke="#ffffff" stroke-width="1" stroke-dasharray="30 3 1.2 3 1.2 3"/>
<path d="M502.5 750.5L574.3 755.1" fill="none" stroke="#ffffff" stroke-width="1" stroke-dasharray="11.5 3.5 1 3.5 1 3.5 21.5 3.5 1 3.5 1 3.5 14"/>
<path d="M502.5 824.6L574.3 819.9" fill="none" stroke="#ffffff" stroke-width="1" stroke-dasharray="11.5 3.5 1 3.5 1 3.5 21.5 3.5 1 3.5 1 3.5 14"/>
<path d="M574.3 755.1Q577 762 582.4 758.1H605.8Q608.7 759 608.7 762V781M608.7 795.6V813Q608.7 816.5 605.8 817H582.4Q577 813 574.3 819.9" fill="none" stroke="#ffffff" stroke-width="1"/>
<path d="M574.3 756V781M574.3 795.6V819" fill="none" stroke="#ffffff" stroke-width="1"/>
<path d="M582.4 756V781M582.4 795.6V819" fill="none" stroke="#ffffff" stroke-width="1"/>
<path d="M605.8 756V781M605.8 795.6V819" fill="none" stroke="#ffffff" stroke-width="1"/>
<line x1="574.3" y1="784.5" x2="574.3" y2="785.5" stroke="#ffffff" stroke-width="1"/>
<line x1="574.3" y1="789.5" x2="574.3" y2="790.5" stroke="#ffffff" stroke-width="1"/>
<line x1="582.4" y1="784.5" x2="582.4" y2="785.5" stroke="#ffffff" stroke-width="1"/>
<line x1="582.4" y1="789.5" x2="582.4" y2="790.5" stroke="#ffffff" stroke-width="1"/>
<line x1="605.8" y1="784.5" x2="605.8" y2="785.5" stroke="#ffffff" stroke-width="1"/>
<line x1="605.8" y1="789.5" x2="605.8" y2="790.5" stroke="#ffffff" stroke-width="1"/>
<line x1="608.7" y1="784.5" x2="608.7" y2="785.5" stroke="#ffffff" stroke-width="1"/>
<line x1="608.7" y1="789.5" x2="608.7" y2="790.5" stroke="#ffffff" stroke-width="1"/>
<path d="M477.2 750.5V767M477.2 774V797M477.2 804V824.6" fill="none" stroke="#ffffff" stroke-width="1"/>
<line x1="477.2" y1="770.0" x2="477.2" y2="771.0" stroke="#ffffff" stroke-width="1"/>
<line x1="477.2" y1="800.0" x2="477.2" y2="801.0" stroke="#ffffff" stroke-width="1"/>
<path d="M502.5 750.5V767M502.5 774V797M502.5 804V824.6" fill="none" stroke="#ffffff" stroke-width="1"/>
<line x1="502.5" y1="770.0" x2="502.5" y2="771.0" stroke="#ffffff" stroke-width="1"/>
<line x1="502.5" y1="800.0" x2="502.5" y2="801.0" stroke="#ffffff" stroke-width="1"/>
<line x1="183.5" y1="646.3" x2="183.5" y2="877.4" stroke="#00ffff" stroke-width="1"/>
<line x1="181" y1="646.3" x2="216.3" y2="646.3" stroke="#00ffff" stroke-width="1"/>
<line x1="181" y1="877.4" x2="216.3" y2="877.4" stroke="#00ffff" stroke-width="1"/>
<polygon points="183.5,646.3 182.1,650.3 184.9,650.3" fill="#00ffff" stroke="#00ffff" stroke-width="0.5"/>
<polygon points="183.5,877.4 182.1,873.4 184.9,873.4" fill="#00ffff" stroke="#00ffff" stroke-width="0.5"/>
<text x="181.5" y="762.5" fill="#00ffff" font-size="9" font-family="Liberation Sans" text-anchor="middle" font-weight="normal" textLength="14" lengthAdjust="spacingAndGlyphs" transform="rotate(-90 181.5 762.5)">140</text>
<path d="M805.00 742.90H810.40M807.70 742.90V752.43M805.00 747.35H810.40M805.00 753.07L810.40 751.16M811.75 743.54H818.50M811.75 747.99H818.50M811.75 752.43H818.50M815.12 741.00V753.70M811.75 753.70L815.12 748.62" fill="none" stroke="#00ffff" stroke-width="1.1"/>
<path d="M826.00 742.90H839.50M827.35 747.35H838.15M826.00 752.43H839.50M832.75 741.00V753.70M828.70 748.62L826.67 751.79" fill="none" stroke="#00ffff" stroke-width="1.1"/>
<path d="M846.60 742.90H860.10M847.95 747.35H858.75M846.60 752.43H860.10M853.35 741.00V753.70M849.30 748.62L847.27 751.79" fill="none" stroke="#00ffff" stroke-width="1.1"/>
<path d="M868.40 742.90H873.12M870.76 742.90V752.43M868.40 747.35H873.12M868.40 753.07L873.12 751.16M874.48 744.17H881.90M876.50 741.00V753.70M880.55 741.00V751.16M874.48 749.89H881.90M876.50 746.08L881.90 753.70" fill="none" stroke="#00ffff" stroke-width="1.1"/>
<text x="746.8" y="767.6" fill="#00ffff" font-size="9" font-family="Liberation Sans" text-anchor="start" font-weight="normal" textLength="8" lengthAdjust="spacingAndGlyphs">1.</text>
<path d="M756.50 760.80H759.23M757.87 760.80V766.80M756.50 763.60H759.23M756.50 767.20L759.23 766.00M760.01 760.00V767.20M764.30 760.00V767.20M760.01 760.00H764.30M760.01 763.60H764.30M760.01 767.20H764.30" fill="none" stroke="#00ffff" stroke-width="0.85"/>
<text x="766.1" y="767.6" fill="#00ffff" font-size="9" font-family="Liberation Sans" text-anchor="start" font-weight="normal" textLength="5" lengthAdjust="spacingAndGlyphs">V</text>
<path d="M771.60 760.80H774.33M772.97 760.80V766.80M771.60 763.60H774.33M771.60 767.20L774.33 766.00M775.11 760.40H779.40M775.11 760.40V764.00M779.40 760.40V764.00M775.11 764.00H779.40M775.11 767.20H779.40M777.25 764.00V767.60" fill="none" stroke="#00ffff" stroke-width="0.85"/>
<path d="M782.57 759.60V767.60M781.20 762.00H783.93M781.20 764.80H783.93M784.71 760.40H789.00M784.71 760.40V764.00M789.00 760.40V764.00M784.71 764.00H789.00M784.71 767.20H789.00M786.86 764.00V767.60" fill="none" stroke="#00ffff" stroke-width="0.85"/>
<text x="790.8000000000001" y="767.6" fill="#00ffff" font-size="9" font-family="Liberation Sans" text-anchor="start" font-weight="normal" textLength="5" lengthAdjust="spacingAndGlyphs">V</text>
<path d="M796.30 760.80H799.42M797.86 760.80V766.80M796.30 763.60H799.42M796.30 767.20L799.42 766.00M800.20 761.60H804.10M801.37 759.60V767.60M803.32 759.60V766.00M800.20 765.20H804.10M800.98 762.80L804.10 767.60" fill="none" stroke="#00ffff" stroke-width="0.85"/>
<path d="M806.29 760.40H813.31M809.80 759.60V763.20M807.07 763.20H812.53M806.68 764.40V767.60M812.92 764.40V767.60M806.68 764.40H812.92M806.68 767.20H812.92" fill="none" stroke="#00ffff" stroke-width="0.85"/>
<path d="M816.87 759.60V767.60M815.50 762.00H818.23M815.50 764.80H818.23M819.01 761.60H823.30M820.18 759.60V767.60M822.52 759.60V766.00M819.01 765.20H823.30M820.18 762.80L823.30 767.60" fill="none" stroke="#00ffff" stroke-width="0.85"/>
<path d="M825.49 760.40H832.51M829.00 759.60V763.20M826.27 763.20H831.73M825.88 764.40V767.60M832.12 764.40V767.60M825.88 764.40H832.12M825.88 767.20H832.12" fill="none" stroke="#00ffff" stroke-width="0.85"/>
<path d="M834.70 760.80H837.04M835.87 760.80V766.80M834.70 763.60H837.04M834.70 767.20L837.04 766.00M837.82 760.00V767.20M842.50 760.00V767.20M837.82 760.00H842.50M837.82 763.60H842.50M837.82 767.20H842.50" fill="none" stroke="#00ffff" stroke-width="0.85"/>
<path d="M845.47 759.60V767.60M844.30 762.00H846.64M844.30 764.80H846.64M847.42 761.60H852.10M848.59 759.60V767.60M851.32 759.60V766.00M847.42 765.20H852.10M848.98 762.80L852.10 767.60" fill="none" stroke="#00ffff" stroke-width="0.85"/>
<path d="M854.29 760.40H861.31M857.80 759.60V763.20M855.07 763.20H860.53M853.90 765.60H861.70M856.24 764.00V767.60M859.36 764.00V767.60" fill="none" stroke="#00ffff" stroke-width="0.85"/>
<path d="M863.89 760.40H870.91M867.40 759.60V763.20M864.67 763.20H870.13M863.50 765.60H871.30M865.84 764.00V767.60M868.96 764.00V767.60" fill="none" stroke="#00ffff" stroke-width="0.85"/>
<path d="M873.10 760.80H880.90M873.88 763.60H880.12M873.10 766.80H880.90M877.00 759.60V767.60M874.66 764.40L873.49 766.40" fill="none" stroke="#00ffff" stroke-width="0.85"/>
<path d="M883.09 760.40H890.11M886.60 759.60V763.20M883.87 763.20H889.33M882.70 765.60H890.50M885.04 764.00V767.60M888.16 764.00V767.60" fill="none" stroke="#00ffff" stroke-width="0.85"/>
<path d="M892.30 760.80H895.42M893.86 760.80V766.80M892.30 763.60H895.42M892.30 767.20L895.42 766.00M896.20 761.60H900.10M897.37 759.60V767.60M899.32 759.60V766.00M896.20 765.20H900.10M896.98 762.80L900.10 767.60" fill="none" stroke="#00ffff" stroke-width="0.85"/>
<path d="M903.46 759.60V767.60M901.90 762.00H905.02M901.90 764.80H905.02M905.80 761.60H909.70M906.97 759.60V767.60M908.92 759.60V766.00M905.80 765.20H909.70M906.58 762.80L909.70 767.60" fill="none" stroke="#00ffff" stroke-width="0.85"/>
<path d="M911.89 760.40H918.91M915.40 759.60V763.20M912.67 763.20H918.13M915.40 763.60L911.89 767.60M915.40 763.60L918.91 767.60M911.50 765.20H919.30" fill="none" stroke="#00ffff" stroke-width="0.85"/>
<rect x="922.6000000000004" y="765.6" width="1.6" height="2" fill="#00ffff"/>
<text x="746.8" y="779.5" fill="#00ffff" font-size="9" font-family="Liberation Sans" text-anchor="start" font-weight="normal" textLength="8" lengthAdjust="spacingAndGlyphs">2.</text>
<path d="M756.89 772.30H763.91M760.40 771.50V775.10M757.67 775.10H763.13M760.40 775.50L756.89 779.50M760.40 775.50L763.91 779.50M756.50 777.10H764.30" fill="none" stroke="#00ffff" stroke-width="0.85"/>
<path d="M767.47 771.50V779.50M766.10 773.90H768.83M766.10 776.70H768.83M769.61 773.50H773.90M770.78 771.50V779.50M773.12 771.50V777.90M769.61 777.10H773.90M770.78 774.70L773.90 779.50" fill="none" stroke="#00ffff" stroke-width="0.85"/>
<text x="775.7" y="779.5" fill="#00ffff" font-size="9" font-family="Liberation Sans" text-anchor="start" font-weight="normal" textLength="5" lengthAdjust="spacingAndGlyphs">V</text>
<path d="M781.20 772.70H789.00M781.98 775.50H788.22M781.20 778.70H789.00M785.10 771.50V779.50M782.76 776.30L781.59 778.30" fill="none" stroke="#00ffff" stroke-width="0.85"/>
<path d="M793.30 771.50L790.80 775.10M792.20 774.30V779.50M791.19 775.90H793.92M794.70 773.10H798.60M794.70 775.90H798.60M794.70 778.70H798.60M796.65 771.50V779.50M794.70 779.50L796.65 776.30" fill="none" stroke="#00ffff" stroke-width="0.85"/>
<path d="M800.40 772.70H803.52M801.96 772.70V778.70M800.40 775.50H803.52M800.40 779.10L803.52 777.90M804.30 772.30H808.20M804.30 772.30V775.90M808.20 772.30V775.90M804.30 775.90H808.20M804.30 779.10H808.20M806.25 775.90V779.50" fill="none" stroke="#00ffff" stroke-width="0.85"/>
<path d="M810.39 772.30H817.41M813.90 771.50V775.10M811.17 775.10H816.63M810.00 777.50H817.80M812.34 775.90V779.50M815.46 775.90V779.50" fill="none" stroke="#00ffff" stroke-width="0.85"/>
<path d="M819.99 772.30H827.01M823.50 771.50V775.10M820.77 775.10H826.23M823.50 775.50L819.99 779.50M823.50 775.50L827.01 779.50M819.60 777.10H827.40" fill="none" stroke="#00ffff" stroke-width="0.85"/>
<path d="M829.20 772.70H837.00M829.98 775.50H836.22M829.20 778.70H837.00M833.10 771.50V779.50M830.76 776.30L829.59 778.30" fill="none" stroke="#00ffff" stroke-width="0.85"/>
<rect x="840.3000000000002" y="777.5" width="1.6" height="2" fill="#00ffff"/>
<path d="M848.79 772.30H855.81M852.30 771.50V775.10M849.57 775.10H855.03M852.30 775.50L848.79 779.50M852.30 775.50L855.81 779.50M848.40 777.10H856.20" fill="none" stroke="#00ffff" stroke-width="0.85"/>
<path d="M858.00 772.70H865.80M858.78 775.50H865.02M858.00 778.70H865.80M861.90 771.50V779.50M859.56 776.30L858.39 778.30" fill="none" stroke="#00ffff" stroke-width="0.85"/>
<path d="M867.60 772.70H870.33M868.97 772.70V778.70M867.60 775.50H870.33M867.60 779.10L870.33 777.90M871.11 771.90V779.10M875.40 771.90V779.10M871.11 771.90H875.40M871.11 775.50H875.40M871.11 779.10H875.40" fill="none" stroke="#00ffff" stroke-width="0.85"/>
<path d="M878.76 771.50V779.50M877.20 773.90H880.32M877.20 776.70H880.32M881.10 773.50H885.00M882.27 771.50V779.50M884.22 771.50V777.90M881.10 777.10H885.00M881.88 774.70L885.00 779.50" fill="none" stroke="#00ffff" stroke-width="0.85"/>
<path d="M887.19 772.30H894.21M890.70 771.50V775.10M887.97 775.10H893.43M886.80 777.50H894.60M889.14 775.90V779.50M892.26 775.90V779.50" fill="none" stroke="#00ffff" stroke-width="0.85"/>
<path d="M896.79 772.30H903.81M900.30 771.50V775.10M897.57 775.10H903.03M897.18 776.30V779.50M903.42 776.30V779.50M897.18 776.30H903.42M897.18 779.10H903.42" fill="none" stroke="#00ffff" stroke-width="0.85"/>
<path d="M907.17 771.50V779.50M906.00 773.90H908.34M906.00 776.70H908.34M909.12 773.50H913.80M910.29 771.50V779.50M913.02 771.50V777.90M909.12 777.10H913.80M910.68 774.70L913.80 779.50" fill="none" stroke="#00ffff" stroke-width="0.85"/>
<path d="M915.60 772.70H923.40M916.38 775.50H922.62M915.60 778.70H923.40M919.50 771.50V779.50M917.16 776.30L915.99 778.30" fill="none" stroke="#00ffff" stroke-width="0.85"/>
<path d="M925.59 772.30H932.61M929.10 771.50V775.10M926.37 775.10H931.83M929.10 775.50L925.59 779.50M929.10 775.50L932.61 779.50M925.20 777.10H933.00" fill="none" stroke="#00ffff" stroke-width="0.85"/>
<path d="M935.97 771.50V779.50M934.80 773.90H937.14M934.80 776.70H937.14M937.92 773.10H942.60M937.92 775.90H942.60M937.92 778.70H942.60M940.26 771.50V779.50M937.92 779.50L940.26 776.30" fill="none" stroke="#00ffff" stroke-width="0.85"/>
<path d="M944.40 772.70H947.52M945.96 772.70V778.70M944.40 775.50H947.52M944.40 779.10L947.52 777.90M948.30 771.90V779.10M952.20 771.90V779.10M948.30 771.90H952.20M948.30 775.50H952.20M948.30 779.10H952.20" fill="none" stroke="#00ffff" stroke-width="0.85"/>
<path d="M956.18 771.50L954.00 775.10M955.23 774.30V779.50M954.39 775.90H956.73M957.51 771.90V779.10M961.80 771.90V779.10M957.51 771.90H961.80M957.51 775.50H961.80M957.51 779.10H961.80" fill="none" stroke="#00ffff" stroke-width="0.85"/>
<rect x="965.1000000000005" y="777.5" width="1.6" height="2" fill="#00ffff"/>
<text x="746.8" y="791.4" fill="#00ffff" font-size="9" font-family="Liberation Sans" text-anchor="start" font-weight="normal" textLength="8" lengthAdjust="spacingAndGlyphs">3.</text>
<path d="M756.50 784.60H759.62M758.06 784.60V790.60M756.50 787.40H759.62M756.50 791.00L759.62 789.80M760.40 785.00H764.30M760.40 787.80H764.30M760.40 790.60H764.30M762.35 783.40V791.40M760.40 791.40L762.35 788.20" fill="none" stroke="#00ffff" stroke-width="0.85"/>
<path d="M767.27 783.40V791.40M766.10 785.80H768.44M766.10 788.60H768.44M769.22 785.00H773.90M769.22 787.80H773.90M769.22 790.60H773.90M771.56 783.40V791.40M769.22 791.40L771.56 788.20" fill="none" stroke="#00ffff" stroke-width="0.85"/>
<path d="M777.57 783.40L775.70 787.00M776.75 786.20V791.40M776.09 787.80H778.04M778.82 785.40H783.50M779.99 783.40V791.40M782.72 783.40V789.80M778.82 789.00H783.50M780.38 786.60L783.50 791.40" fill="none" stroke="#00ffff" stroke-width="0.85"/>
<path d="M787.17 783.40L785.30 787.00M786.35 786.20V791.40M785.69 787.80H787.64M788.42 784.20H793.10M788.42 784.20V787.80M793.10 784.20V787.80M788.42 787.80H793.10M788.42 791.00H793.10M790.76 787.80V791.40" fill="none" stroke="#00ffff" stroke-width="0.85"/>
<path d="M797.08 783.40L794.90 787.00M796.13 786.20V791.40M795.29 787.80H797.63M798.41 785.00H802.70M798.41 787.80H802.70M798.41 790.60H802.70M800.56 783.40V791.40M798.41 791.40L800.56 788.20" fill="none" stroke="#00ffff" stroke-width="0.85"/>
<path d="M806.37 783.40L804.50 787.00M805.55 786.20V791.40M804.89 787.80H806.84M807.62 784.20H812.30M807.62 784.20V787.80M812.30 784.20V787.80M807.62 787.80H812.30M807.62 791.00H812.30M809.96 787.80V791.40" fill="none" stroke="#00ffff" stroke-width="0.85"/>
<path d="M815.47 783.40V791.40M814.10 785.80H816.83M814.10 788.60H816.83M817.61 785.40H821.90M818.78 783.40V791.40M821.12 783.40V789.80M817.61 789.00H821.90M818.78 786.60L821.90 791.40" fill="none" stroke="#00ffff" stroke-width="0.85"/>
<rect x="825.2000000000002" y="789.4" width="1.6" height="2" fill="#00ffff"/>
<path d="M834.86 783.40V791.40M833.30 785.80H836.42M833.30 788.60H836.42M837.20 785.00H841.10M837.20 787.80H841.10M837.20 790.60H841.10M839.15 783.40V791.40M837.20 791.40L839.15 788.20" fill="none" stroke="#00ffff" stroke-width="0.85"/>
<path d="M844.07 783.40V791.40M842.90 785.80H845.24M842.90 788.60H845.24M846.02 785.40H850.70M847.19 783.40V791.40M849.92 783.40V789.80M846.02 789.00H850.70M847.58 786.60L850.70 791.40" fill="none" stroke="#00ffff" stroke-width="0.85"/>
<path d="M852.89 784.20H859.91M856.40 783.40V787.00M853.67 787.00H859.13M852.50 789.40H860.30M854.84 787.80V791.40M857.96 787.80V791.40" fill="none" stroke="#00ffff" stroke-width="0.85"/>
<path d="M862.49 784.20H869.51M866.00 783.40V787.00M863.27 787.00H868.73M862.88 788.20V791.40M869.12 788.20V791.40M862.88 788.20H869.12M862.88 791.00H869.12" fill="none" stroke="#00ffff" stroke-width="0.85"/>
<text x="871.7000000000003" y="791.4" fill="#00ffff" font-size="9" font-family="Liberation Sans" text-anchor="start" font-weight="normal" textLength="5" lengthAdjust="spacingAndGlyphs">5</text>
<path d="M878.09 784.20H885.11M881.60 783.40V787.00M878.87 787.00H884.33M881.60 787.40L878.09 791.40M881.60 787.40L885.11 791.40M877.70 789.00H885.50" fill="none" stroke="#00ffff" stroke-width="0.85"/>
<path d="M889.80 783.40L887.30 787.00M888.70 786.20V791.40M887.69 787.80H890.42M891.20 785.00H895.10M891.20 787.80H895.10M891.20 790.60H895.10M893.15 783.40V791.40M891.20 791.40L893.15 788.20" fill="none" stroke="#00ffff" stroke-width="0.85"/>
<path d="M897.29 784.20H904.31M900.80 783.40V787.00M898.07 787.00H903.53M896.90 789.40H904.70M899.24 787.80V791.40M902.36 787.80V791.40" fill="none" stroke="#00ffff" stroke-width="0.85"/>
<path d="M907.67 783.40V791.40M906.50 785.80H908.84M906.50 788.60H908.84M909.62 783.80V791.00M914.30 783.80V791.00M909.62 783.80H914.30M909.62 787.40H914.30M909.62 791.00H914.30" fill="none" stroke="#00ffff" stroke-width="0.85"/>
<path d="M917.66 783.40V791.40M916.10 785.80H919.22M916.10 788.60H919.22M920.00 784.20H923.90M920.00 784.20V787.80M923.90 784.20V787.80M920.00 787.80H923.90M920.00 791.00H923.90M921.95 787.80V791.40" fill="none" stroke="#00ffff" stroke-width="0.85"/>
<rect x="927.2000000000004" y="789.4" width="1.6" height="2" fill="#00ffff"/>
<text x="746.8" y="803.2" fill="#00ffff" font-size="9" font-family="Liberation Sans" text-anchor="start" font-weight="normal" textLength="8" lengthAdjust="spacingAndGlyphs">4.</text>
<path d="M758.68 795.20L756.50 798.80M757.73 798.00V803.20M756.89 799.60H759.23M760.01 797.20H764.30M761.18 795.20V803.20M763.52 795.20V801.60M760.01 800.80H764.30M761.18 798.40L764.30 803.20" fill="none" stroke="#00ffff" stroke-width="0.85"/>
<path d="M767.66 795.20V803.20M766.10 797.60H769.22M766.10 800.40H769.22M770.00 796.00H773.90M770.00 796.00V799.60M773.90 796.00V799.60M770.00 799.60H773.90M770.00 802.80H773.90M771.95 799.60V803.20" fill="none" stroke="#00ffff" stroke-width="0.85"/>
<path d="M776.09 796.00H783.11M779.60 795.20V798.80M776.87 798.80H782.33M779.60 799.20L776.09 803.20M779.60 799.20L783.11 803.20M775.70 800.80H783.50" fill="none" stroke="#00ffff" stroke-width="0.85"/>
<path d="M785.69 796.00H792.71M789.20 795.20V798.80M786.47 798.80H791.93M786.08 800.00V803.20M792.32 800.00V803.20M786.08 800.00H792.32M786.08 802.80H792.32" fill="none" stroke="#00ffff" stroke-width="0.85"/>
<path d="M794.90 796.40H802.70M795.68 799.20H801.92M794.90 802.40H802.70M798.80 795.20V803.20M796.46 800.00L795.29 802.00" fill="none" stroke="#00ffff" stroke-width="0.85"/>
<path d="M804.89 796.00H811.91M808.40 795.20V798.80M805.67 798.80H811.13M805.28 800.00V803.20M811.52 800.00V803.20M805.28 800.00H811.52M805.28 802.80H811.52" fill="none" stroke="#00ffff" stroke-width="0.85"/>
<path d="M815.27 795.20V803.20M814.10 797.60H816.44M814.10 800.40H816.44M817.22 796.00H821.90M817.22 796.00V799.60M821.90 796.00V799.60M817.22 799.60H821.90M817.22 802.80H821.90M819.56 799.60V803.20" fill="none" stroke="#00ffff" stroke-width="0.85"/>
<text x="824.7000000000002" y="803.2" fill="#00ffff" font-size="9" font-family="Liberation Sans" text-anchor="start" font-weight="normal" textLength="6" lengthAdjust="spacingAndGlyphs">ø</text>
<text x="832.7000000000002" y="803.2" fill="#00ffff" font-size="9" font-family="Liberation Sans" text-anchor="start" font-weight="normal" textLength="9" lengthAdjust="spacingAndGlyphs">16</text>
<rect x="842.7000000000002" y="792.2" width="4.5" height="10" fill="#00ffff"/>
<rect x="853.2000000000002" y="801.2" width="1.6" height="2" fill="#00ffff"/>
<path d="M861.30 796.40H869.10M862.08 799.20H868.32M861.30 802.40H869.10M865.20 795.20V803.20M862.86 800.00L861.69 802.00" fill="none" stroke="#00ffff" stroke-width="0.85"/>
<path d="M873.08 795.20L870.90 798.80M872.13 798.00V803.20M871.29 799.60H873.63M874.41 797.20H878.70M875.58 795.20V803.20M877.92 795.20V801.60M874.41 800.80H878.70M875.58 798.40L878.70 803.20" fill="none" stroke="#00ffff" stroke-width="0.85"/>
<path d="M881.87 795.20V803.20M880.50 797.60H883.23M880.50 800.40H883.23M884.01 796.00H888.30M884.01 796.00V799.60M888.30 796.00V799.60M884.01 799.60H888.30M884.01 802.80H888.30M886.16 799.60V803.20" fill="none" stroke="#00ffff" stroke-width="0.85"/>
<path d="M890.49 796.00H897.51M894.00 795.20V798.80M891.27 798.80H896.73M890.88 800.00V803.20M897.12 800.00V803.20M890.88 800.00H897.12M890.88 802.80H897.12" fill="none" stroke="#00ffff" stroke-width="0.85"/>
<path d="M901.07 795.20V803.20M899.70 797.60H902.43M899.70 800.40H902.43M903.21 797.20H907.50M904.38 795.20V803.20M906.72 795.20V801.60M903.21 800.80H907.50M904.38 798.40L907.50 803.20" fill="none" stroke="#00ffff" stroke-width="0.85"/>
<path d="M911.80 795.20L909.30 798.80M910.70 798.00V803.20M909.69 799.60H912.42M913.20 795.60V802.80M917.10 795.60V802.80M913.20 795.60H917.10M913.20 799.20H917.10M913.20 802.80H917.10" fill="none" stroke="#00ffff" stroke-width="0.85"/>
<path d="M918.90 796.40H921.24M920.07 796.40V802.40M918.90 799.20H921.24M918.90 802.80L921.24 801.60M922.02 796.80H926.70M922.02 799.60H926.70M922.02 802.40H926.70M924.36 795.20V803.20M922.02 803.20L924.36 800.00" fill="none" stroke="#00ffff" stroke-width="0.85"/>
<path d="M931.00 795.20L928.50 798.80M929.90 798.00V803.20M928.89 799.60H931.62M932.40 796.80H936.30M932.40 799.60H936.30M932.40 802.40H936.30M934.35 795.20V803.20M932.40 803.20L934.35 800.00" fill="none" stroke="#00ffff" stroke-width="0.85"/>
<text x="939.1000000000004" y="803.2" fill="#00ffff" font-size="9" font-family="Liberation Sans" text-anchor="start" font-weight="normal" textLength="6" lengthAdjust="spacingAndGlyphs">ø</text>
<text x="947.1000000000004" y="803.2" fill="#00ffff" font-size="9" font-family="Liberation Sans" text-anchor="start" font-weight="normal" textLength="9" lengthAdjust="spacingAndGlyphs">24</text>
<rect x="957.1000000000004" y="792.2" width="4.5" height="10" fill="#00ffff"/>
<rect x="967.6000000000004" y="801.2" width="1.6" height="2" fill="#00ffff"/>
</svg></body></html>
